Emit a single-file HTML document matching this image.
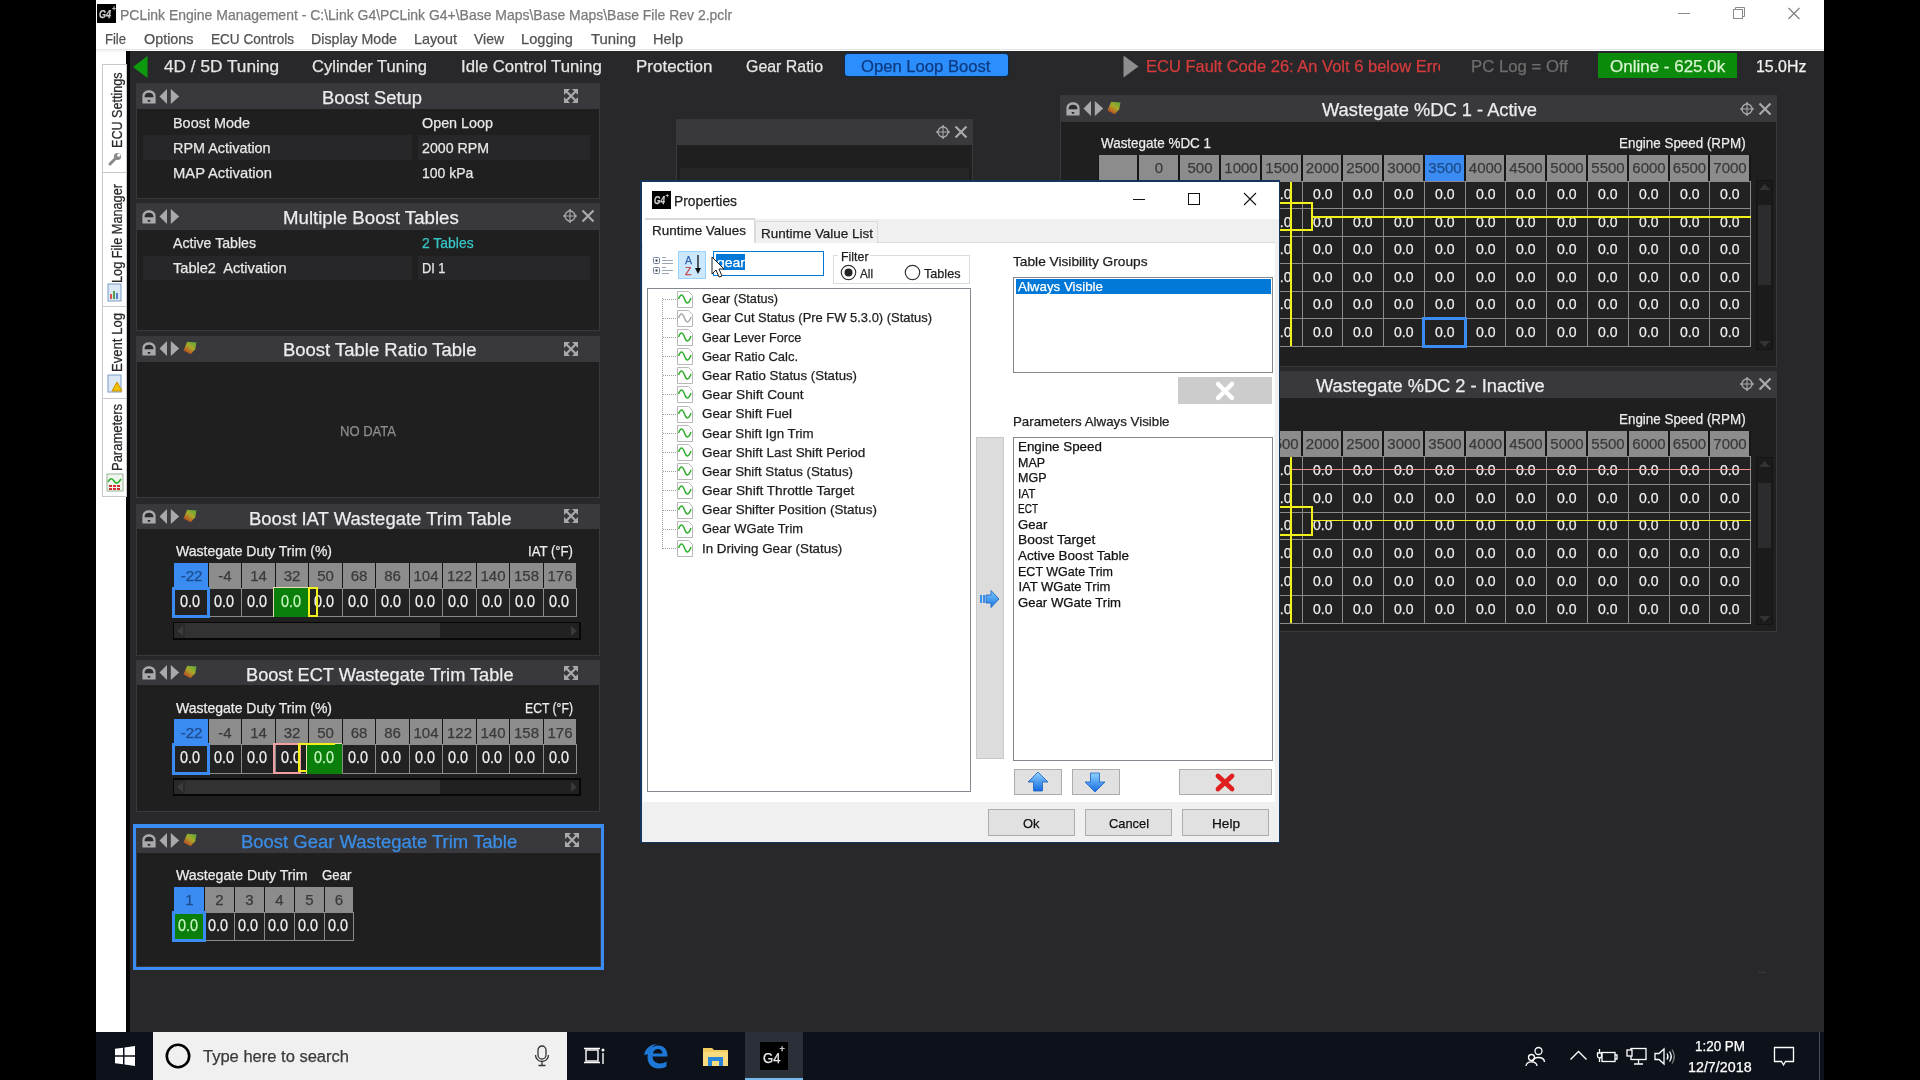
<!DOCTYPE html>
<html><head><meta charset="utf-8"><title>PCLink</title>
<style>
html,body{margin:0;padding:0;width:1920px;height:1080px;overflow:hidden;background:#000;}
body{position:relative;font-family:"Liberation Sans",sans-serif;}
.a{position:absolute;}
.t{position:absolute;white-space:pre;transform-origin:0 0;-webkit-text-stroke:0.25px currentColor;}
svg.a{overflow:visible;}
</style></head><body><div class="a" style="left:0;top:0;width:1920px;height:1080px;overflow:hidden;will-change:transform;">
<div class="a" style="left:0.0px;top:0.0px;width:1920.0px;height:1080.0px;background:#000;"></div>
<div class="a" style="left:96.0px;top:0.0px;width:1728.0px;height:52.0px;background:#ffffff;"></div>
<div class="a" style="left:96.0px;top:49.0px;width:1728.0px;height:1.0px;background:#e6e6e6;"></div>
<div class="a" style="left:96.0px;top:50.0px;width:30.0px;height:2.0px;background:#f4f4f4;"></div>
<div class="a" style="left:96.0px;top:52.0px;width:29.5px;height:980.0px;background:#ffffff;"></div>
<div class="a" style="left:125.5px;top:51.0px;width:1698.5px;height:981.0px;background:#28282b;"></div>
<div class="a" style="left:125.5px;top:51.0px;width:4.2px;height:981.0px;background:#050505;"></div>
<div class="a" style="left:97.0px;top:4.0px;width:19.0px;height:19.0px;background:#000;"></div>
<div class="t" style="left:99.0px;top:8.7px;font-size:11.00px;line-height:11.00px;color:#cfcfcf;transform:scaleX(0.8178);font-style:italic;font-weight:bold;">G4</div>
<div class="t" style="left:112.0px;top:5.1px;font-size:7.00px;line-height:7.00px;color:#cfcfcf;">+</div>
<div class="t" style="left:120.0px;top:7.7px;font-size:14.50px;line-height:14.50px;color:#7a7a7a;transform:scaleX(0.9631);">PCLink Engine Management - C:\Link G4\PCLink G4+\Base Maps\Base Maps\Base File Rev 2.pclr</div>
<div class="a" style="left:1678.0px;top:12.5px;width:12.0px;height:1.0px;background:#8a8a8a;"></div>
<svg class="a" style="left:1732.0px;top:6.0px;" width="14.0" height="14.0" viewBox="0 0 14.0 14.0"><rect x="1.5" y="3.5" width="9" height="9" fill="none" stroke="#8a8a8a" stroke-width="1"/><path d="M3.5 3.5 V1.5 H12.5 V10.5 H10.5" fill="none" stroke="#8a8a8a" stroke-width="1"/></svg>
<svg class="a" style="left:1787.0px;top:7.0px;" width="14.0" height="13.0" viewBox="0 0 14.0 13.0"><path d="M1.5 1 L12.5 12 M12.5 1 L1.5 12" stroke="#7a7a7a" stroke-width="1.1"/></svg>
<div class="t" style="left:105.0px;top:31.3px;font-size:15.00px;line-height:15.00px;color:#525252;transform:scaleX(0.8688);">File</div>
<div class="t" style="left:143.8px;top:31.3px;font-size:15.00px;line-height:15.00px;color:#525252;transform:scaleX(0.9576);">Options</div>
<div class="t" style="left:210.8px;top:31.3px;font-size:15.00px;line-height:15.00px;color:#525252;transform:scaleX(0.9052);">ECU Controls</div>
<div class="t" style="left:311.0px;top:31.3px;font-size:15.00px;line-height:15.00px;color:#525252;transform:scaleX(0.9464);">Display Mode</div>
<div class="t" style="left:414.3px;top:31.3px;font-size:15.00px;line-height:15.00px;color:#525252;transform:scaleX(0.9548);">Layout</div>
<div class="t" style="left:474.0px;top:31.3px;font-size:15.00px;line-height:15.00px;color:#525252;transform:scaleX(0.9305);">View</div>
<div class="t" style="left:521.0px;top:31.3px;font-size:15.00px;line-height:15.00px;color:#525252;transform:scaleX(0.9740);">Logging</div>
<div class="t" style="left:590.7px;top:31.3px;font-size:15.00px;line-height:15.00px;color:#525252;transform:scaleX(0.9932);">Tuning</div>
<div class="t" style="left:652.7px;top:31.3px;font-size:15.00px;line-height:15.00px;color:#525252;transform:scaleX(0.9724);">Help</div>
<div class="a" style="left:102.0px;top:64.0px;width:25.0px;height:433.0px;background:#ffffff;box-sizing:border-box;border:1px solid #c9c9c9;"></div>
<div class="a" style="left:103.0px;top:172.0px;width:23.0px;height:1.0px;background:#c9c9c9;"></div>
<div class="a" style="left:103.0px;top:306.0px;width:23.0px;height:1.0px;background:#c9c9c9;"></div>
<div class="a" style="left:103.0px;top:398.0px;width:23.0px;height:1.0px;background:#c9c9c9;"></div>
<div class="t" style="left:109.8px;top:147.5px;font-size:14.0px;line-height:14.0px;color:#2a2a2a;transform-origin:0 0;transform:rotate(-90deg) scaleX(0.8985);">ECU Settings</div>
<div class="t" style="left:109.8px;top:283.0px;font-size:14.0px;line-height:14.0px;color:#2a2a2a;transform-origin:0 0;transform:rotate(-90deg) scaleX(0.9087);">Log File Manager</div>
<div class="t" style="left:109.8px;top:372.0px;font-size:14.0px;line-height:14.0px;color:#2a2a2a;transform-origin:0 0;transform:rotate(-90deg) scaleX(0.9358);">Event Log</div>
<div class="t" style="left:109.8px;top:471.0px;font-size:14.0px;line-height:14.0px;color:#2a2a2a;transform-origin:0 0;transform:rotate(-90deg) scaleX(0.9260);">Parameters</div>
<svg class="a" style="left:107.0px;top:151.0px;" width="16.0" height="16.0" viewBox="0 0 16.0 16.0"><path d="M3 13 L9 7" stroke="#8a8a8a" stroke-width="3" stroke-linecap="round"/><circle cx="10.5" cy="5.5" r="3.6" fill="#8a8a8a"/><circle cx="11.8" cy="4.2" r="1.6" fill="#fff"/></svg>
<svg class="a" style="left:106.0px;top:283.0px;" width="18.0" height="19.0" viewBox="0 0 18.0 19.0"><rect x="2" y="1" width="13" height="17" fill="#dbe9f7" stroke="#7d9cc0"/><rect x="4" y="11" width="2" height="5" fill="#e05050"/><rect x="7" y="8" width="2" height="8" fill="#50a050"/><rect x="10" y="10" width="2" height="6" fill="#5080d0"/></svg>
<svg class="a" style="left:106.0px;top:374.0px;" width="18.0" height="19.0" viewBox="0 0 18.0 19.0"><rect x="2" y="1" width="13" height="17" fill="#dbe9f7" stroke="#7d9cc0"/><path d="M6 17 L11 8 L16 17 Z" fill="#f2c200" stroke="#c89000"/></svg>
<svg class="a" style="left:106.0px;top:473.0px;" width="18.0" height="19.0" viewBox="0 0 18.0 19.0"><rect x="1" y="1" width="16" height="17" fill="#eef6ee" stroke="#9ab09a"/><path d="M2 9 Q5 3 8 8 T15 6" fill="none" stroke="#30b030" stroke-width="1.6"/><rect x="3" y="12" width="3" height="2" fill="#d03030"/><rect x="7" y="12" width="3" height="2" fill="#d03030"/><rect x="11" y="12" width="3" height="2" fill="#d03030"/><rect x="3" y="15" width="3" height="2" fill="#d03030"/><rect x="7" y="15" width="3" height="2" fill="#d03030"/><rect x="11" y="15" width="3" height="2" fill="#d03030"/></svg>
<svg class="a" style="left:132.0px;top:55.0px;" width="17.0" height="24.0" viewBox="0 0 17.0 24.0"><path d="M15.5 1 L15.5 23 L1 12 Z" fill="#0e9a0e"/></svg>
<div class="t" style="left:164.0px;top:58.0px;font-size:16.50px;line-height:16.50px;color:#e6e6e6;transform:scaleX(1.0449);">4D / 5D Tuning</div>
<div class="t" style="left:311.7px;top:58.0px;font-size:16.50px;line-height:16.50px;color:#e6e6e6;transform:scaleX(1.0031);">Cylinder Tuning</div>
<div class="t" style="left:461.0px;top:58.0px;font-size:16.50px;line-height:16.50px;color:#e6e6e6;transform:scaleX(1.0159);">Idle Control Tuning</div>
<div class="t" style="left:636.0px;top:58.0px;font-size:16.50px;line-height:16.50px;color:#e6e6e6;transform:scaleX(1.0297);">Protection</div>
<div class="t" style="left:746.0px;top:58.0px;font-size:16.50px;line-height:16.50px;color:#e6e6e6;transform:scaleX(0.9651);">Gear Ratio</div>
<div class="a" style="left:844.0px;top:53.2px;width:164.5px;height:24.0px;background:#0e2a4a;border-radius:4px;"></div>
<div class="a" style="left:845.0px;top:54.2px;width:162.5px;height:22.0px;background:#2c8dfc;border-radius:3px;"></div>
<div class="t" style="left:861.0px;top:58.0px;font-size:16.50px;line-height:16.50px;color:#0d3b82;transform:scaleX(1.0083);">Open Loop Boost</div>
<svg class="a" style="left:1122.0px;top:54.0px;" width="18.0" height="25.0" viewBox="0 0 18.0 25.0"><path d="M1.5 1.5 L16.5 12.5 L1.5 23.5 Z" fill="#8e8e8e"/></svg>
<div class="a" style="left:1146px;top:52px;width:294px;height:26px;overflow:hidden;">
<div class="t" style="left:0.0px;top:6.2px;font-size:16.50px;line-height:16.50px;color:#d63b3b;">ECU Fault Code 26: An Volt 6 below Error</div>
</div>
<div class="t" style="left:1470.8px;top:58.0px;font-size:16.50px;line-height:16.50px;color:#6e6e6e;transform:scaleX(1.0152);">PC Log = Off</div>
<div class="a" style="left:1598.4px;top:52.5px;width:139.0px;height:25.2px;background:#0b8a0b;"></div>
<div class="t" style="left:1610.3px;top:58.0px;font-size:16.50px;line-height:16.50px;color:#d8f4d0;transform:scaleX(1.0295);">Online - 625.0k</div>
<div class="t" style="left:1755.8px;top:58.0px;font-size:16.50px;line-height:16.50px;color:#f0f0f0;transform:scaleX(0.9640);">15.0Hz</div>
<div class="a" style="left:136.0px;top:83.0px;width:464.0px;height:116.0px;background:#39393d;"></div>
<div class="a" style="left:137.0px;top:109.0px;width:462.0px;height:89.0px;background:#1f1f20;"></div>
<svg class="a" style="left:141.5px;top:89.5px;" width="14.0" height="14.0" viewBox="0 0 14.0 14.0"><path d="M0.4 13.6 V6.5 C0.4 2.6 3 0.3 7 0.3 C11 0.3 13.6 2.6 13.6 6.5 V13.6 Z" fill="#a9a9ad"/><path d="M2.6 6.6 C2.6 4.2 4.4 2.7 7 2.7 C9.6 2.7 11.4 4.2 11.4 6.6 V7.2 H2.6 Z" fill="#2a2a2e"/><rect x="5.6" y="10" width="2.8" height="1.7" rx="0.6" fill="#2a2a2e"/></svg>
<svg class="a" style="left:159.0px;top:88.5px;" width="21.0" height="15.0" viewBox="0 0 21.0 15.0"><path d="M8 0 L8 15 L0.5 7.5 Z" fill="#a9a9ad"/><path d="M11.8 0 L11.8 15 L20.2 7.5 Z" fill="#a9a9ad"/></svg>
<div class="t" style="left:321.7px;top:88.8px;font-size:18.00px;line-height:18.00px;color:#ececec;transform:scaleX(1.0197);">Boost Setup</div>
<svg class="a" style="left:564.0px;top:89.0px;" width="14.0" height="14.0" viewBox="0 0 14.0 14.0"><g stroke="#a9a9ad" stroke-width="2.2" fill="none"><path d="M2 2 L12 12 M12 2 L2 12"/></g><g fill="#a9a9ad"><path d="M0 0 H6 L0 6 Z"/><path d="M14 0 V6 L8 0 Z"/><path d="M0 14 V8 L6 14 Z"/><path d="M14 14 H8 L14 8 Z"/></g></svg>
<div class="a" style="left:143.0px;top:135.0px;width:269.0px;height:25.0px;background:#272729;"></div>
<div class="a" style="left:418.0px;top:135.0px;width:172.0px;height:25.0px;background:#272729;"></div>
<div class="t" style="left:173.0px;top:114.8px;font-size:15.00px;line-height:15.00px;color:#e8e8e8;transform:scaleX(0.9620);">Boost Mode</div>
<div class="t" style="left:173.0px;top:139.8px;font-size:15.00px;line-height:15.00px;color:#e8e8e8;transform:scaleX(0.9597);">RPM Activation</div>
<div class="t" style="left:173.0px;top:164.8px;font-size:15.00px;line-height:15.00px;color:#e8e8e8;transform:scaleX(0.9840);">MAP Activation</div>
<div class="t" style="left:422.3px;top:114.8px;font-size:15.00px;line-height:15.00px;color:#e8e8e8;transform:scaleX(0.9565);">Open Loop</div>
<div class="t" style="left:422.3px;top:139.8px;font-size:15.00px;line-height:15.00px;color:#e8e8e8;transform:scaleX(0.9454);">2000 RPM</div>
<div class="t" style="left:422.3px;top:164.8px;font-size:15.00px;line-height:15.00px;color:#e8e8e8;transform:scaleX(0.9339);">100 kPa</div>
<div class="a" style="left:136.0px;top:203.0px;width:464.0px;height:128.0px;background:#39393d;"></div>
<div class="a" style="left:137.0px;top:229.6px;width:462.0px;height:100.4px;background:#1f1f20;"></div>
<svg class="a" style="left:141.5px;top:209.8px;" width="14.0" height="14.0" viewBox="0 0 14.0 14.0"><path d="M0.4 13.6 V6.5 C0.4 2.6 3 0.3 7 0.3 C11 0.3 13.6 2.6 13.6 6.5 V13.6 Z" fill="#a9a9ad"/><path d="M2.6 6.6 C2.6 4.2 4.4 2.7 7 2.7 C9.6 2.7 11.4 4.2 11.4 6.6 V7.2 H2.6 Z" fill="#2a2a2e"/><rect x="5.6" y="10" width="2.8" height="1.7" rx="0.6" fill="#2a2a2e"/></svg>
<svg class="a" style="left:159.0px;top:208.8px;" width="21.0" height="15.0" viewBox="0 0 21.0 15.0"><path d="M8 0 L8 15 L0.5 7.5 Z" fill="#a9a9ad"/><path d="M11.8 0 L11.8 15 L20.2 7.5 Z" fill="#a9a9ad"/></svg>
<div class="t" style="left:282.9px;top:208.8px;font-size:18.00px;line-height:18.00px;color:#ececec;transform:scaleX(1.0350);">Multiple Boost Tables</div>
<svg class="a" style="left:563.0px;top:209.3px;" width="14.0" height="14.0" viewBox="0 0 14.0 14.0"><g stroke="#a9a9ad" fill="none"><circle cx="7" cy="7" r="5" stroke-width="1.3"/><path d="M7 0.3 V13.7 M0.3 7 H13.7" stroke-width="1.1"/></g><g fill="#a9a9ad"><path d="M7 0 L8.6 1.8 H5.4 Z"/><path d="M7 14 L8.6 12.2 H5.4 Z"/><path d="M0 7 L1.8 5.4 V8.6 Z"/><path d="M14 7 L12.2 5.4 V8.6 Z"/></g></svg>
<svg class="a" style="left:581.0px;top:209.3px;" width="14.0" height="14.0" viewBox="0 0 14.0 14.0"><path d="M1.5 1.5 L12.5 12.5 M12.5 1.5 L1.5 12.5" stroke="#a9a9ad" stroke-width="2.2"/></svg>
<div class="a" style="left:143.0px;top:256.0px;width:269.0px;height:24.0px;background:#272729;"></div>
<div class="a" style="left:418.0px;top:256.0px;width:172.0px;height:24.0px;background:#272729;"></div>
<div class="t" style="left:172.5px;top:234.8px;font-size:15.00px;line-height:15.00px;color:#e8e8e8;transform:scaleX(0.9421);">Active Tables</div>
<div class="t" style="left:172.5px;top:259.8px;font-size:15.00px;line-height:15.00px;color:#e8e8e8;transform:scaleX(0.9723);">Table2  Activation</div>
<div class="t" style="left:422.3px;top:234.8px;font-size:15.00px;line-height:15.00px;color:#39c6c6;transform:scaleX(0.9281);">2 Tables</div>
<div class="t" style="left:422.3px;top:259.8px;font-size:15.00px;line-height:15.00px;color:#e8e8e8;transform:scaleX(0.8543);">DI 1</div>
<div class="a" style="left:136.0px;top:335.6px;width:464.0px;height:162.4px;background:#39393d;"></div>
<div class="a" style="left:137.0px;top:361.7px;width:462.0px;height:135.3px;background:#1f1f20;"></div>
<svg class="a" style="left:141.5px;top:342.1px;" width="14.0" height="14.0" viewBox="0 0 14.0 14.0"><path d="M0.4 13.6 V6.5 C0.4 2.6 3 0.3 7 0.3 C11 0.3 13.6 2.6 13.6 6.5 V13.6 Z" fill="#a9a9ad"/><path d="M2.6 6.6 C2.6 4.2 4.4 2.7 7 2.7 C9.6 2.7 11.4 4.2 11.4 6.6 V7.2 H2.6 Z" fill="#2a2a2e"/><rect x="5.6" y="10" width="2.8" height="1.7" rx="0.6" fill="#2a2a2e"/></svg>
<svg class="a" style="left:159.0px;top:341.1px;" width="21.0" height="15.0" viewBox="0 0 21.0 15.0"><path d="M8 0 L8 15 L0.5 7.5 Z" fill="#a9a9ad"/><path d="M11.8 0 L11.8 15 L20.2 7.5 Z" fill="#a9a9ad"/></svg>
<svg class="a" style="left:183.0px;top:341.1px;" width="15.0" height="15.0" viewBox="0 0 15.0 15.0"><defs><linearGradient id="g2171" x1="0.9" y1="0" x2="0.2" y2="1"><stop offset="0" stop-color="#5da83a"/><stop offset="0.45" stop-color="#a8a82a"/><stop offset="0.75" stop-color="#b86a22"/><stop offset="1" stop-color="#a83a26"/></linearGradient></defs><path d="M4.2 0.8 L13.5 1.6 L12.2 8.2 L7.6 13.2 L0.5 9.6 Z" fill="url(#g2171)"/></svg>
<div class="t" style="left:283.3px;top:341.4px;font-size:18.00px;line-height:18.00px;color:#ececec;transform:scaleX(1.0262);">Boost Table Ratio Table</div>
<svg class="a" style="left:564.0px;top:341.6px;" width="14.0" height="14.0" viewBox="0 0 14.0 14.0"><g stroke="#a9a9ad" stroke-width="2.2" fill="none"><path d="M2 2 L12 12 M12 2 L2 12"/></g><g fill="#a9a9ad"><path d="M0 0 H6 L0 6 Z"/><path d="M14 0 V6 L8 0 Z"/><path d="M0 14 V8 L6 14 Z"/><path d="M14 14 H8 L14 8 Z"/></g></svg>
<div class="t" style="left:340.0px;top:424.1px;font-size:14.00px;line-height:14.00px;color:#8c8c8c;transform:scaleX(0.9310);">NO DATA</div>
<div class="a" style="left:136.0px;top:503.8px;width:464.0px;height:152.2px;background:#39393d;"></div>
<div class="a" style="left:137.0px;top:528.8px;width:462.0px;height:126.2px;background:#1f1f20;"></div>
<svg class="a" style="left:141.5px;top:509.8px;" width="14.0" height="14.0" viewBox="0 0 14.0 14.0"><path d="M0.4 13.6 V6.5 C0.4 2.6 3 0.3 7 0.3 C11 0.3 13.6 2.6 13.6 6.5 V13.6 Z" fill="#a9a9ad"/><path d="M2.6 6.6 C2.6 4.2 4.4 2.7 7 2.7 C9.6 2.7 11.4 4.2 11.4 6.6 V7.2 H2.6 Z" fill="#2a2a2e"/><rect x="5.6" y="10" width="2.8" height="1.7" rx="0.6" fill="#2a2a2e"/></svg>
<svg class="a" style="left:159.0px;top:508.8px;" width="21.0" height="15.0" viewBox="0 0 21.0 15.0"><path d="M8 0 L8 15 L0.5 7.5 Z" fill="#a9a9ad"/><path d="M11.8 0 L11.8 15 L20.2 7.5 Z" fill="#a9a9ad"/></svg>
<svg class="a" style="left:183.0px;top:508.8px;" width="15.0" height="15.0" viewBox="0 0 15.0 15.0"><defs><linearGradient id="g2338" x1="0.9" y1="0" x2="0.2" y2="1"><stop offset="0" stop-color="#5da83a"/><stop offset="0.45" stop-color="#a8a82a"/><stop offset="0.75" stop-color="#b86a22"/><stop offset="1" stop-color="#a83a26"/></linearGradient></defs><path d="M4.2 0.8 L13.5 1.6 L12.2 8.2 L7.6 13.2 L0.5 9.6 Z" fill="url(#g2338)"/></svg>
<div class="t" style="left:248.8px;top:509.5px;font-size:18.00px;line-height:18.00px;color:#ececec;transform:scaleX(1.0276);">Boost IAT Wastegate Trim Table</div>
<svg class="a" style="left:564.0px;top:509.2px;" width="14.0" height="14.0" viewBox="0 0 14.0 14.0"><g stroke="#a9a9ad" stroke-width="2.2" fill="none"><path d="M2 2 L12 12 M12 2 L2 12"/></g><g fill="#a9a9ad"><path d="M0 0 H6 L0 6 Z"/><path d="M14 0 V6 L8 0 Z"/><path d="M0 14 V8 L6 14 Z"/><path d="M14 14 H8 L14 8 Z"/></g></svg>
<div class="t" style="left:176.0px;top:543.3px;font-size:15.00px;line-height:15.00px;color:#ececec;transform:scaleX(0.9343);">Wastegate Duty Trim (%)</div>
<div class="t" style="left:527.5px;top:543.3px;font-size:15.00px;line-height:15.00px;color:#ececec;transform:scaleX(0.8777);">IAT (°F)</div>
<div class="a" style="left:174.0px;top:563.0px;width:402.0px;height:53.0px;background:#161616;"></div>
<div class="a" style="left:174.0px;top:563.0px;width:34.0px;height:25.0px;background:#3a8cf2;"></div>
<div class="t" style="left:180.7px;top:568.3px;font-size:15.00px;line-height:15.00px;color:#1d4c8c;">-22</div>
<div class="a" style="left:209.0px;top:563.0px;width:32.0px;height:25.0px;background:#8c8c8c;"></div>
<div class="t" style="left:218.3px;top:568.3px;font-size:15.00px;line-height:15.00px;color:#3a3a3a;">-4</div>
<div class="a" style="left:242.0px;top:563.0px;width:33.0px;height:25.0px;background:#8c8c8c;"></div>
<div class="t" style="left:250.2px;top:568.3px;font-size:15.00px;line-height:15.00px;color:#3a3a3a;">14</div>
<div class="a" style="left:276.0px;top:563.0px;width:32.0px;height:25.0px;background:#8c8c8c;"></div>
<div class="t" style="left:283.7px;top:568.3px;font-size:15.00px;line-height:15.00px;color:#3a3a3a;">32</div>
<div class="a" style="left:309.0px;top:563.0px;width:33.0px;height:25.0px;background:#8c8c8c;"></div>
<div class="t" style="left:317.2px;top:568.3px;font-size:15.00px;line-height:15.00px;color:#3a3a3a;">50</div>
<div class="a" style="left:343.0px;top:563.0px;width:32.0px;height:25.0px;background:#8c8c8c;"></div>
<div class="t" style="left:350.7px;top:568.3px;font-size:15.00px;line-height:15.00px;color:#3a3a3a;">68</div>
<div class="a" style="left:376.0px;top:563.0px;width:33.0px;height:25.0px;background:#8c8c8c;"></div>
<div class="t" style="left:384.2px;top:568.3px;font-size:15.00px;line-height:15.00px;color:#3a3a3a;">86</div>
<div class="a" style="left:410.0px;top:563.0px;width:32.0px;height:25.0px;background:#8c8c8c;"></div>
<div class="t" style="left:413.5px;top:568.3px;font-size:15.00px;line-height:15.00px;color:#3a3a3a;">104</div>
<div class="a" style="left:443.0px;top:563.0px;width:33.0px;height:25.0px;background:#8c8c8c;"></div>
<div class="t" style="left:447.0px;top:568.3px;font-size:15.00px;line-height:15.00px;color:#3a3a3a;">122</div>
<div class="a" style="left:477.0px;top:563.0px;width:32.0px;height:25.0px;background:#8c8c8c;"></div>
<div class="t" style="left:480.5px;top:568.3px;font-size:15.00px;line-height:15.00px;color:#3a3a3a;">140</div>
<div class="a" style="left:510.0px;top:563.0px;width:33.0px;height:25.0px;background:#8c8c8c;"></div>
<div class="t" style="left:514.0px;top:568.3px;font-size:15.00px;line-height:15.00px;color:#3a3a3a;">158</div>
<div class="a" style="left:544.0px;top:563.0px;width:32.0px;height:25.0px;background:#8c8c8c;"></div>
<div class="t" style="left:547.5px;top:568.3px;font-size:15.00px;line-height:15.00px;color:#3a3a3a;">176</div>
<div class="a" style="left:174.0px;top:588.0px;width:403.0px;height:29.0px;background:#8a8a8a;"></div>
<div class="a" style="left:175.0px;top:589.0px;width:33.0px;height:27.0px;background:#222222;"></div>
<div class="t" style="left:180.0px;top:593.9px;font-size:16.00px;line-height:16.00px;color:#f0f0f0;transform:scaleX(0.8992);">0.0</div>
<div class="a" style="left:209.0px;top:589.0px;width:32.0px;height:27.0px;background:#222222;"></div>
<div class="t" style="left:213.5px;top:593.9px;font-size:16.00px;line-height:16.00px;color:#f0f0f0;transform:scaleX(0.8992);">0.0</div>
<div class="a" style="left:242.0px;top:589.0px;width:33.0px;height:27.0px;background:#222222;"></div>
<div class="t" style="left:247.0px;top:593.9px;font-size:16.00px;line-height:16.00px;color:#f0f0f0;transform:scaleX(0.8992);">0.0</div>
<div class="a" style="left:276.0px;top:589.0px;width:32.0px;height:27.0px;background:#222222;"></div>
<div class="a" style="left:273.0px;top:587.0px;width:35.0px;height:29.5px;background:#e8e0b0;"></div>
<div class="a" style="left:274.0px;top:588.0px;width:34.0px;height:28.5px;background:#0b7f0b;"></div>
<div class="t" style="left:280.5px;top:593.9px;font-size:16.00px;line-height:16.00px;color:#c8f5c0;transform:scaleX(0.8992);">0.0</div>
<div class="a" style="left:309.0px;top:589.0px;width:33.0px;height:27.0px;background:#222222;"></div>
<div class="t" style="left:314.0px;top:593.9px;font-size:16.00px;line-height:16.00px;color:#f0f0f0;transform:scaleX(0.8992);">0.0</div>
<div class="a" style="left:343.0px;top:589.0px;width:32.0px;height:27.0px;background:#222222;"></div>
<div class="t" style="left:347.5px;top:593.9px;font-size:16.00px;line-height:16.00px;color:#f0f0f0;transform:scaleX(0.8992);">0.0</div>
<div class="a" style="left:376.0px;top:589.0px;width:33.0px;height:27.0px;background:#222222;"></div>
<div class="t" style="left:381.0px;top:593.9px;font-size:16.00px;line-height:16.00px;color:#f0f0f0;transform:scaleX(0.8992);">0.0</div>
<div class="a" style="left:410.0px;top:589.0px;width:32.0px;height:27.0px;background:#222222;"></div>
<div class="t" style="left:414.5px;top:593.9px;font-size:16.00px;line-height:16.00px;color:#f0f0f0;transform:scaleX(0.8992);">0.0</div>
<div class="a" style="left:443.0px;top:589.0px;width:33.0px;height:27.0px;background:#222222;"></div>
<div class="t" style="left:448.0px;top:593.9px;font-size:16.00px;line-height:16.00px;color:#f0f0f0;transform:scaleX(0.8992);">0.0</div>
<div class="a" style="left:477.0px;top:589.0px;width:32.0px;height:27.0px;background:#222222;"></div>
<div class="t" style="left:481.5px;top:593.9px;font-size:16.00px;line-height:16.00px;color:#f0f0f0;transform:scaleX(0.8992);">0.0</div>
<div class="a" style="left:510.0px;top:589.0px;width:33.0px;height:27.0px;background:#222222;"></div>
<div class="t" style="left:515.0px;top:593.9px;font-size:16.00px;line-height:16.00px;color:#f0f0f0;transform:scaleX(0.8992);">0.0</div>
<div class="a" style="left:544.0px;top:589.0px;width:32.0px;height:27.0px;background:#222222;"></div>
<div class="t" style="left:548.5px;top:593.9px;font-size:16.00px;line-height:16.00px;color:#f0f0f0;transform:scaleX(0.8992);">0.0</div>
<div class="a" style="left:308.0px;top:586.7px;width:10.0px;height:29.9px;box-sizing:border-box;border:2.5px solid #f2f21a;"></div>
<div class="a" style="left:171.5px;top:587.0px;width:38.2px;height:31.0px;box-sizing:border-box;border:3.75px solid #3a8cf2;"></div>
<div class="a" style="left:172.7px;top:621.7px;width:408.0px;height:18.3px;background:#070707;"></div>
<div class="a" style="left:174.2px;top:623.2px;width:405.0px;height:14.8px;background:#212121;"></div>
<div class="a" style="left:174.2px;top:623.2px;width:266.0px;height:14.8px;background:#323232;"></div>
<div class="a" style="left:174.2px;top:623.2px;width:11.0px;height:14.8px;background:#2a2a2a;"></div>
<svg class="a" style="left:176.7px;top:625.7px;" width="7.0" height="10.0" viewBox="0 0 7.0 10.0"><path d="M6 0 V10 L0 5 Z" fill="#3c3c3c"/></svg>
<svg class="a" style="left:569.7px;top:625.7px;" width="7.0" height="10.0" viewBox="0 0 7.0 10.0"><path d="M1 0 V10 L7 5 Z" fill="#3a3a3a"/></svg>
<div class="a" style="left:136.0px;top:660.0px;width:464.0px;height:152.0px;background:#39393d;"></div>
<div class="a" style="left:137.0px;top:685.0px;width:462.0px;height:126.0px;background:#1f1f20;"></div>
<svg class="a" style="left:141.5px;top:666.0px;" width="14.0" height="14.0" viewBox="0 0 14.0 14.0"><path d="M0.4 13.6 V6.5 C0.4 2.6 3 0.3 7 0.3 C11 0.3 13.6 2.6 13.6 6.5 V13.6 Z" fill="#a9a9ad"/><path d="M2.6 6.6 C2.6 4.2 4.4 2.7 7 2.7 C9.6 2.7 11.4 4.2 11.4 6.6 V7.2 H2.6 Z" fill="#2a2a2e"/><rect x="5.6" y="10" width="2.8" height="1.7" rx="0.6" fill="#2a2a2e"/></svg>
<svg class="a" style="left:159.0px;top:665.0px;" width="21.0" height="15.0" viewBox="0 0 21.0 15.0"><path d="M8 0 L8 15 L0.5 7.5 Z" fill="#a9a9ad"/><path d="M11.8 0 L11.8 15 L20.2 7.5 Z" fill="#a9a9ad"/></svg>
<svg class="a" style="left:183.0px;top:665.0px;" width="15.0" height="15.0" viewBox="0 0 15.0 15.0"><defs><linearGradient id="g2495" x1="0.9" y1="0" x2="0.2" y2="1"><stop offset="0" stop-color="#5da83a"/><stop offset="0.45" stop-color="#a8a82a"/><stop offset="0.75" stop-color="#b86a22"/><stop offset="1" stop-color="#a83a26"/></linearGradient></defs><path d="M4.2 0.8 L13.5 1.6 L12.2 8.2 L7.6 13.2 L0.5 9.6 Z" fill="url(#g2495)"/></svg>
<div class="t" style="left:246.2px;top:665.8px;font-size:18.00px;line-height:18.00px;color:#ececec;transform:scaleX(1.0103);">Boost ECT Wastegate Trim Table</div>
<svg class="a" style="left:564.0px;top:665.5px;" width="14.0" height="14.0" viewBox="0 0 14.0 14.0"><g stroke="#a9a9ad" stroke-width="2.2" fill="none"><path d="M2 2 L12 12 M12 2 L2 12"/></g><g fill="#a9a9ad"><path d="M0 0 H6 L0 6 Z"/><path d="M14 0 V6 L8 0 Z"/><path d="M0 14 V8 L6 14 Z"/><path d="M14 14 H8 L14 8 Z"/></g></svg>
<div class="t" style="left:176.0px;top:699.8px;font-size:15.00px;line-height:15.00px;color:#ececec;transform:scaleX(0.9343);">Wastegate Duty Trim (%)</div>
<div class="t" style="left:524.5px;top:699.8px;font-size:15.00px;line-height:15.00px;color:#ececec;transform:scaleX(0.8129);">ECT (°F)</div>
<div class="a" style="left:174.0px;top:719.0px;width:402.0px;height:54.0px;background:#161616;"></div>
<div class="a" style="left:174.0px;top:719.0px;width:34.0px;height:25.0px;background:#3a8cf2;"></div>
<div class="t" style="left:180.7px;top:724.6px;font-size:15.00px;line-height:15.00px;color:#1d4c8c;">-22</div>
<div class="a" style="left:209.0px;top:719.0px;width:32.0px;height:25.0px;background:#8c8c8c;"></div>
<div class="t" style="left:218.3px;top:724.6px;font-size:15.00px;line-height:15.00px;color:#3a3a3a;">-4</div>
<div class="a" style="left:242.0px;top:719.0px;width:33.0px;height:25.0px;background:#8c8c8c;"></div>
<div class="t" style="left:250.2px;top:724.6px;font-size:15.00px;line-height:15.00px;color:#3a3a3a;">14</div>
<div class="a" style="left:276.0px;top:719.0px;width:32.0px;height:25.0px;background:#8c8c8c;"></div>
<div class="t" style="left:283.7px;top:724.6px;font-size:15.00px;line-height:15.00px;color:#3a3a3a;">32</div>
<div class="a" style="left:309.0px;top:719.0px;width:33.0px;height:25.0px;background:#8c8c8c;"></div>
<div class="t" style="left:317.2px;top:724.6px;font-size:15.00px;line-height:15.00px;color:#3a3a3a;">50</div>
<div class="a" style="left:343.0px;top:719.0px;width:32.0px;height:25.0px;background:#8c8c8c;"></div>
<div class="t" style="left:350.7px;top:724.6px;font-size:15.00px;line-height:15.00px;color:#3a3a3a;">68</div>
<div class="a" style="left:376.0px;top:719.0px;width:33.0px;height:25.0px;background:#8c8c8c;"></div>
<div class="t" style="left:384.2px;top:724.6px;font-size:15.00px;line-height:15.00px;color:#3a3a3a;">86</div>
<div class="a" style="left:410.0px;top:719.0px;width:32.0px;height:25.0px;background:#8c8c8c;"></div>
<div class="t" style="left:413.5px;top:724.6px;font-size:15.00px;line-height:15.00px;color:#3a3a3a;">104</div>
<div class="a" style="left:443.0px;top:719.0px;width:33.0px;height:25.0px;background:#8c8c8c;"></div>
<div class="t" style="left:447.0px;top:724.6px;font-size:15.00px;line-height:15.00px;color:#3a3a3a;">122</div>
<div class="a" style="left:477.0px;top:719.0px;width:32.0px;height:25.0px;background:#8c8c8c;"></div>
<div class="t" style="left:480.5px;top:724.6px;font-size:15.00px;line-height:15.00px;color:#3a3a3a;">140</div>
<div class="a" style="left:510.0px;top:719.0px;width:33.0px;height:25.0px;background:#8c8c8c;"></div>
<div class="t" style="left:514.0px;top:724.6px;font-size:15.00px;line-height:15.00px;color:#3a3a3a;">158</div>
<div class="a" style="left:544.0px;top:719.0px;width:32.0px;height:25.0px;background:#8c8c8c;"></div>
<div class="t" style="left:547.5px;top:724.6px;font-size:15.00px;line-height:15.00px;color:#3a3a3a;">176</div>
<div class="a" style="left:174.0px;top:744.0px;width:403.0px;height:30.0px;background:#8a8a8a;"></div>
<div class="a" style="left:175.0px;top:745.0px;width:33.0px;height:28.0px;background:#222222;"></div>
<div class="t" style="left:180.0px;top:750.4px;font-size:16.00px;line-height:16.00px;color:#f0f0f0;transform:scaleX(0.8992);">0.0</div>
<div class="a" style="left:209.0px;top:745.0px;width:32.0px;height:28.0px;background:#222222;"></div>
<div class="t" style="left:213.5px;top:750.4px;font-size:16.00px;line-height:16.00px;color:#f0f0f0;transform:scaleX(0.8992);">0.0</div>
<div class="a" style="left:242.0px;top:745.0px;width:33.0px;height:28.0px;background:#222222;"></div>
<div class="t" style="left:247.0px;top:750.4px;font-size:16.00px;line-height:16.00px;color:#f0f0f0;transform:scaleX(0.8992);">0.0</div>
<div class="a" style="left:276.0px;top:745.0px;width:32.0px;height:28.0px;background:#222222;"></div>
<div class="t" style="left:280.5px;top:750.4px;font-size:16.00px;line-height:16.00px;color:#f0f0f0;transform:scaleX(0.8992);">0.0</div>
<div class="a" style="left:309.0px;top:745.0px;width:33.0px;height:28.0px;background:#222222;"></div>
<div class="a" style="left:306.0px;top:743.0px;width:36.0px;height:30.5px;background:#e8e0b0;"></div>
<div class="a" style="left:307.0px;top:744.0px;width:35.0px;height:29.5px;background:#0b7f0b;"></div>
<div class="t" style="left:314.0px;top:750.4px;font-size:16.00px;line-height:16.00px;color:#c8f5c0;transform:scaleX(0.8992);">0.0</div>
<div class="a" style="left:343.0px;top:745.0px;width:32.0px;height:28.0px;background:#222222;"></div>
<div class="t" style="left:347.5px;top:750.4px;font-size:16.00px;line-height:16.00px;color:#f0f0f0;transform:scaleX(0.8992);">0.0</div>
<div class="a" style="left:376.0px;top:745.0px;width:33.0px;height:28.0px;background:#222222;"></div>
<div class="t" style="left:381.0px;top:750.4px;font-size:16.00px;line-height:16.00px;color:#f0f0f0;transform:scaleX(0.8992);">0.0</div>
<div class="a" style="left:410.0px;top:745.0px;width:32.0px;height:28.0px;background:#222222;"></div>
<div class="t" style="left:414.5px;top:750.4px;font-size:16.00px;line-height:16.00px;color:#f0f0f0;transform:scaleX(0.8992);">0.0</div>
<div class="a" style="left:443.0px;top:745.0px;width:33.0px;height:28.0px;background:#222222;"></div>
<div class="t" style="left:448.0px;top:750.4px;font-size:16.00px;line-height:16.00px;color:#f0f0f0;transform:scaleX(0.8992);">0.0</div>
<div class="a" style="left:477.0px;top:745.0px;width:32.0px;height:28.0px;background:#222222;"></div>
<div class="t" style="left:481.5px;top:750.4px;font-size:16.00px;line-height:16.00px;color:#f0f0f0;transform:scaleX(0.8992);">0.0</div>
<div class="a" style="left:510.0px;top:745.0px;width:33.0px;height:28.0px;background:#222222;"></div>
<div class="t" style="left:515.0px;top:750.4px;font-size:16.00px;line-height:16.00px;color:#f0f0f0;transform:scaleX(0.8992);">0.0</div>
<div class="a" style="left:544.0px;top:745.0px;width:32.0px;height:28.0px;background:#222222;"></div>
<div class="t" style="left:548.5px;top:750.4px;font-size:16.00px;line-height:16.00px;color:#f0f0f0;transform:scaleX(0.8992);">0.0</div>
<div class="a" style="left:273.0px;top:743.0px;width:28.0px;height:30.5px;box-sizing:border-box;border:2.5px solid #f0a0a0;"></div>
<div class="a" style="left:171.5px;top:743.0px;width:38.2px;height:32.0px;box-sizing:border-box;border:3.75px solid #3a8cf2;"></div>
<div class="a" style="left:297.6px;top:742.7px;width:2.7px;height:29.5px;background:#f2f21a;"></div>
<div class="a" style="left:297.6px;top:742.7px;width:37.4px;height:2.8px;background:#f2f21a;"></div>
<div class="a" style="left:297.6px;top:769.5px;width:9.9px;height:2.7px;background:#f2f21a;"></div>
<div class="a" style="left:172.7px;top:778.0px;width:408.0px;height:18.3px;background:#070707;"></div>
<div class="a" style="left:174.2px;top:779.5px;width:405.0px;height:14.8px;background:#212121;"></div>
<div class="a" style="left:174.2px;top:779.5px;width:266.0px;height:14.8px;background:#323232;"></div>
<div class="a" style="left:174.2px;top:779.5px;width:11.0px;height:14.8px;background:#2a2a2a;"></div>
<svg class="a" style="left:176.7px;top:782.0px;" width="7.0" height="10.0" viewBox="0 0 7.0 10.0"><path d="M6 0 V10 L0 5 Z" fill="#3c3c3c"/></svg>
<svg class="a" style="left:569.7px;top:782.0px;" width="7.0" height="10.0" viewBox="0 0 7.0 10.0"><path d="M1 0 V10 L7 5 Z" fill="#3a3a3a"/></svg>
<div class="a" style="left:133.0px;top:824.4px;width:471.0px;height:145.6px;background:#3a8cf2;"></div>
<div class="a" style="left:136.0px;top:827.5px;width:465.0px;height:139.5px;background:#39393d;"></div>
<div class="a" style="left:137.0px;top:853.3px;width:463.0px;height:112.7px;background:#1f1f20;"></div>
<svg class="a" style="left:141.5px;top:833.9px;" width="14.0" height="14.0" viewBox="0 0 14.0 14.0"><path d="M0.4 13.6 V6.5 C0.4 2.6 3 0.3 7 0.3 C11 0.3 13.6 2.6 13.6 6.5 V13.6 Z" fill="#a9a9ad"/><path d="M2.6 6.6 C2.6 4.2 4.4 2.7 7 2.7 C9.6 2.7 11.4 4.2 11.4 6.6 V7.2 H2.6 Z" fill="#2a2a2e"/><rect x="5.6" y="10" width="2.8" height="1.7" rx="0.6" fill="#2a2a2e"/></svg>
<svg class="a" style="left:159.0px;top:832.9px;" width="21.0" height="15.0" viewBox="0 0 21.0 15.0"><path d="M8 0 L8 15 L0.5 7.5 Z" fill="#a9a9ad"/><path d="M11.8 0 L11.8 15 L20.2 7.5 Z" fill="#a9a9ad"/></svg>
<svg class="a" style="left:183.0px;top:832.9px;" width="15.0" height="15.0" viewBox="0 0 15.0 15.0"><defs><linearGradient id="g2662" x1="0.9" y1="0" x2="0.2" y2="1"><stop offset="0" stop-color="#5da83a"/><stop offset="0.45" stop-color="#a8a82a"/><stop offset="0.75" stop-color="#b86a22"/><stop offset="1" stop-color="#a83a26"/></linearGradient></defs><path d="M4.2 0.8 L13.5 1.6 L12.2 8.2 L7.6 13.2 L0.5 9.6 Z" fill="url(#g2662)"/></svg>
<div class="t" style="left:241.1px;top:833.3px;font-size:18.00px;line-height:18.00px;color:#3a8ee8;transform:scaleX(1.0263);">Boost Gear Wastegate Trim Table</div>
<svg class="a" style="left:565.0px;top:833.4px;" width="14.0" height="14.0" viewBox="0 0 14.0 14.0"><g stroke="#a9a9ad" stroke-width="2.2" fill="none"><path d="M2 2 L12 12 M12 2 L2 12"/></g><g fill="#a9a9ad"><path d="M0 0 H6 L0 6 Z"/><path d="M14 0 V6 L8 0 Z"/><path d="M0 14 V8 L6 14 Z"/><path d="M14 14 H8 L14 8 Z"/></g></svg>
<div class="a" style="left:137.0px;top:853.3px;width:463.0px;height:113.2px;background:#1f1f20;"></div>
<div class="t" style="left:176.0px;top:867.3px;font-size:15.00px;line-height:15.00px;color:#ececec;transform:scaleX(0.9428);">Wastegate Duty Trim</div>
<div class="t" style="left:321.5px;top:867.3px;font-size:15.00px;line-height:15.00px;color:#ececec;transform:scaleX(0.8816);">Gear</div>
<div class="a" style="left:174.0px;top:887.0px;width:179.0px;height:53.0px;background:#161616;"></div>
<div class="a" style="left:174.0px;top:887.0px;width:30.0px;height:25.0px;background:#3a8cf2;"></div>
<div class="t" style="left:185.3px;top:892.3px;font-size:15.00px;line-height:15.00px;color:#1d4c8c;">1</div>
<div class="a" style="left:205.0px;top:887.0px;width:29.0px;height:25.0px;background:#8c8c8c;"></div>
<div class="t" style="left:215.3px;top:892.3px;font-size:15.00px;line-height:15.00px;color:#3a3a3a;">2</div>
<div class="a" style="left:235.0px;top:887.0px;width:29.0px;height:25.0px;background:#8c8c8c;"></div>
<div class="t" style="left:245.3px;top:892.3px;font-size:15.00px;line-height:15.00px;color:#3a3a3a;">3</div>
<div class="a" style="left:265.0px;top:887.0px;width:29.0px;height:25.0px;background:#8c8c8c;"></div>
<div class="t" style="left:275.3px;top:892.3px;font-size:15.00px;line-height:15.00px;color:#3a3a3a;">4</div>
<div class="a" style="left:295.0px;top:887.0px;width:29.0px;height:25.0px;background:#8c8c8c;"></div>
<div class="t" style="left:305.3px;top:892.3px;font-size:15.00px;line-height:15.00px;color:#3a3a3a;">5</div>
<div class="a" style="left:325.0px;top:887.0px;width:28.0px;height:25.0px;background:#8c8c8c;"></div>
<div class="t" style="left:334.8px;top:892.3px;font-size:15.00px;line-height:15.00px;color:#3a3a3a;">6</div>
<div class="a" style="left:174.0px;top:912.0px;width:180.0px;height:29.0px;background:#8a8a8a;"></div>
<div class="a" style="left:175.0px;top:913.0px;width:29.0px;height:27.0px;background:#222222;"></div>
<div class="a" style="left:174.0px;top:911.0px;width:30.0px;height:29.5px;background:#e8e0b0;"></div>
<div class="a" style="left:174.0px;top:912.0px;width:30.0px;height:28.5px;background:#0b7f0b;"></div>
<div class="t" style="left:178.0px;top:917.9px;font-size:16.00px;line-height:16.00px;color:#c8f5c0;transform:scaleX(0.8992);">0.0</div>
<div class="a" style="left:205.0px;top:913.0px;width:29.0px;height:27.0px;background:#222222;"></div>
<div class="t" style="left:208.0px;top:917.9px;font-size:16.00px;line-height:16.00px;color:#f0f0f0;transform:scaleX(0.8992);">0.0</div>
<div class="a" style="left:235.0px;top:913.0px;width:29.0px;height:27.0px;background:#222222;"></div>
<div class="t" style="left:238.0px;top:917.9px;font-size:16.00px;line-height:16.00px;color:#f0f0f0;transform:scaleX(0.8992);">0.0</div>
<div class="a" style="left:265.0px;top:913.0px;width:29.0px;height:27.0px;background:#222222;"></div>
<div class="t" style="left:268.0px;top:917.9px;font-size:16.00px;line-height:16.00px;color:#f0f0f0;transform:scaleX(0.8992);">0.0</div>
<div class="a" style="left:295.0px;top:913.0px;width:29.0px;height:27.0px;background:#222222;"></div>
<div class="t" style="left:298.0px;top:917.9px;font-size:16.00px;line-height:16.00px;color:#f0f0f0;transform:scaleX(0.8992);">0.0</div>
<div class="a" style="left:325.0px;top:913.0px;width:28.0px;height:27.0px;background:#222222;"></div>
<div class="t" style="left:327.5px;top:917.9px;font-size:16.00px;line-height:16.00px;color:#f0f0f0;transform:scaleX(0.8992);">0.0</div>
<div class="a" style="left:171.5px;top:911.0px;width:34.2px;height:31.0px;box-sizing:border-box;border:3.75px solid #3a8cf2;"></div>
<div class="a" style="left:676.0px;top:119.0px;width:297.0px;height:81.0px;background:#39393d;"></div>
<div class="a" style="left:677.0px;top:145.0px;width:295.0px;height:54.0px;background:#1f1f20;"></div>
<svg class="a" style="left:936.0px;top:125.0px;" width="14.0" height="14.0" viewBox="0 0 14.0 14.0"><g stroke="#a9a9ad" fill="none"><circle cx="7" cy="7" r="5" stroke-width="1.3"/><path d="M7 0.3 V13.7 M0.3 7 H13.7" stroke-width="1.1"/></g><g fill="#a9a9ad"><path d="M7 0 L8.6 1.8 H5.4 Z"/><path d="M7 14 L8.6 12.2 H5.4 Z"/><path d="M0 7 L1.8 5.4 V8.6 Z"/><path d="M14 7 L12.2 5.4 V8.6 Z"/></g></svg>
<svg class="a" style="left:954.0px;top:125.0px;" width="14.0" height="14.0" viewBox="0 0 14.0 14.0"><path d="M1.5 1.5 L12.5 12.5 M12.5 1.5 L1.5 12.5" stroke="#a9a9ad" stroke-width="2.2"/></svg>
<div class="a" style="left:680.0px;top:168.0px;width:289.0px;height:32.0px;background:#262627;"></div>
<div class="a" style="left:1060.0px;top:95.0px;width:717.0px;height:272.0px;background:#39393d;"></div>
<div class="a" style="left:1061.0px;top:122.0px;width:715.0px;height:244.0px;background:#1f1f20;"></div>
<svg class="a" style="left:1065.5px;top:102.0px;" width="14.0" height="14.0" viewBox="0 0 14.0 14.0"><path d="M0.4 13.6 V6.5 C0.4 2.6 3 0.3 7 0.3 C11 0.3 13.6 2.6 13.6 6.5 V13.6 Z" fill="#a9a9ad"/><path d="M2.6 6.6 C2.6 4.2 4.4 2.7 7 2.7 C9.6 2.7 11.4 4.2 11.4 6.6 V7.2 H2.6 Z" fill="#2a2a2e"/><rect x="5.6" y="10" width="2.8" height="1.7" rx="0.6" fill="#2a2a2e"/></svg>
<svg class="a" style="left:1083.0px;top:101.0px;" width="21.0" height="15.0" viewBox="0 0 21.0 15.0"><path d="M8 0 L8 15 L0.5 7.5 Z" fill="#a9a9ad"/><path d="M11.8 0 L11.8 15 L20.2 7.5 Z" fill="#a9a9ad"/></svg>
<svg class="a" style="left:1107.0px;top:101.0px;" width="15.0" height="15.0" viewBox="0 0 15.0 15.0"><defs><linearGradient id="g11171" x1="0.9" y1="0" x2="0.2" y2="1"><stop offset="0" stop-color="#5da83a"/><stop offset="0.45" stop-color="#a8a82a"/><stop offset="0.75" stop-color="#b86a22"/><stop offset="1" stop-color="#a83a26"/></linearGradient></defs><path d="M4.2 0.8 L13.5 1.6 L12.2 8.2 L7.6 13.2 L0.5 9.6 Z" fill="url(#g11171)"/></svg>
<div class="t" style="left:1321.7px;top:100.8px;font-size:18.00px;line-height:18.00px;color:#ececec;transform:scaleX(1.0170);">Wastegate %DC 1 - Active</div>
<svg class="a" style="left:1740.0px;top:101.5px;" width="14.0" height="14.0" viewBox="0 0 14.0 14.0"><g stroke="#a9a9ad" fill="none"><circle cx="7" cy="7" r="5" stroke-width="1.3"/><path d="M7 0.3 V13.7 M0.3 7 H13.7" stroke-width="1.1"/></g><g fill="#a9a9ad"><path d="M7 0 L8.6 1.8 H5.4 Z"/><path d="M7 14 L8.6 12.2 H5.4 Z"/><path d="M0 7 L1.8 5.4 V8.6 Z"/><path d="M14 7 L12.2 5.4 V8.6 Z"/></g></svg>
<svg class="a" style="left:1758.0px;top:101.5px;" width="14.0" height="14.0" viewBox="0 0 14.0 14.0"><path d="M1.5 1.5 L12.5 12.5 M12.5 1.5 L1.5 12.5" stroke="#a9a9ad" stroke-width="2.2"/></svg>
<div class="t" style="left:1100.6px;top:134.8px;font-size:15.00px;line-height:15.00px;color:#ececec;transform:scaleX(0.8956);">Wastegate %DC 1</div>
<div class="t" style="left:1619.4px;top:134.8px;font-size:15.00px;line-height:15.00px;color:#ececec;transform:scaleX(0.8932);">Engine Speed (RPM)</div>
<div class="a" style="left:1098.0px;top:155.0px;width:653.0px;height:26.0px;background:#161616;"></div>
<div class="a" style="left:1099.0px;top:155.0px;width:38.0px;height:26.0px;background:#8c8c8c;"></div>
<div class="a" style="left:1139.0px;top:155.0px;width:39.0px;height:26.0px;background:#8c8c8c;"></div>
<div class="t" style="left:1154.8px;top:159.8px;font-size:15.00px;line-height:15.00px;color:#3a3a3a;">0</div>
<div class="a" style="left:1180.0px;top:155.0px;width:39.0px;height:26.0px;background:#8c8c8c;"></div>
<div class="t" style="left:1187.5px;top:159.8px;font-size:15.00px;line-height:15.00px;color:#3a3a3a;">500</div>
<div class="a" style="left:1221.0px;top:155.0px;width:39.0px;height:26.0px;background:#8c8c8c;"></div>
<div class="t" style="left:1224.3px;top:159.8px;font-size:15.00px;line-height:15.00px;color:#3a3a3a;">1000</div>
<div class="a" style="left:1262.0px;top:155.0px;width:39.0px;height:26.0px;background:#8c8c8c;"></div>
<div class="t" style="left:1265.3px;top:159.8px;font-size:15.00px;line-height:15.00px;color:#3a3a3a;">1500</div>
<div class="a" style="left:1303.0px;top:155.0px;width:38.0px;height:26.0px;background:#8c8c8c;"></div>
<div class="t" style="left:1305.8px;top:159.8px;font-size:15.00px;line-height:15.00px;color:#3a3a3a;">2000</div>
<div class="a" style="left:1343.0px;top:155.0px;width:39.0px;height:26.0px;background:#8c8c8c;"></div>
<div class="t" style="left:1346.3px;top:159.8px;font-size:15.00px;line-height:15.00px;color:#3a3a3a;">2500</div>
<div class="a" style="left:1384.0px;top:155.0px;width:39.0px;height:26.0px;background:#8c8c8c;"></div>
<div class="t" style="left:1387.3px;top:159.8px;font-size:15.00px;line-height:15.00px;color:#3a3a3a;">3000</div>
<div class="a" style="left:1425.0px;top:155.0px;width:39.0px;height:26.0px;background:#3a8cf2;"></div>
<div class="t" style="left:1428.3px;top:159.8px;font-size:15.00px;line-height:15.00px;color:#1d4c8c;">3500</div>
<div class="a" style="left:1466.0px;top:155.0px;width:38.0px;height:26.0px;background:#8c8c8c;"></div>
<div class="t" style="left:1468.8px;top:159.8px;font-size:15.00px;line-height:15.00px;color:#3a3a3a;">4000</div>
<div class="a" style="left:1506.0px;top:155.0px;width:39.0px;height:26.0px;background:#8c8c8c;"></div>
<div class="t" style="left:1509.3px;top:159.8px;font-size:15.00px;line-height:15.00px;color:#3a3a3a;">4500</div>
<div class="a" style="left:1547.0px;top:155.0px;width:39.0px;height:26.0px;background:#8c8c8c;"></div>
<div class="t" style="left:1550.3px;top:159.8px;font-size:15.00px;line-height:15.00px;color:#3a3a3a;">5000</div>
<div class="a" style="left:1588.0px;top:155.0px;width:39.0px;height:26.0px;background:#8c8c8c;"></div>
<div class="t" style="left:1591.3px;top:159.8px;font-size:15.00px;line-height:15.00px;color:#3a3a3a;">5500</div>
<div class="a" style="left:1629.0px;top:155.0px;width:39.0px;height:26.0px;background:#8c8c8c;"></div>
<div class="t" style="left:1632.3px;top:159.8px;font-size:15.00px;line-height:15.00px;color:#3a3a3a;">6000</div>
<div class="a" style="left:1670.0px;top:155.0px;width:38.0px;height:26.0px;background:#8c8c8c;"></div>
<div class="t" style="left:1672.8px;top:159.8px;font-size:15.00px;line-height:15.00px;color:#3a3a3a;">6500</div>
<div class="a" style="left:1710.0px;top:155.0px;width:39.0px;height:26.0px;background:#8c8c8c;"></div>
<div class="t" style="left:1713.3px;top:159.8px;font-size:15.00px;line-height:15.00px;color:#3a3a3a;">7000</div>
<div class="a" style="left:1098.0px;top:181.0px;width:653.0px;height:166.0px;background:#8a8a8a;"></div>
<div class="a" style="left:1099.0px;top:182.0px;width:39.0px;height:26.0px;background:#222222;"></div>
<div class="t" style="left:1108.8px;top:186.1px;font-size:15.50px;line-height:15.50px;color:#f0f0f0;transform:scaleX(0.9050);">0.0</div>
<div class="a" style="left:1139.0px;top:182.0px;width:40.0px;height:26.0px;background:#222222;"></div>
<div class="t" style="left:1149.2px;top:186.1px;font-size:15.50px;line-height:15.50px;color:#f0f0f0;transform:scaleX(0.9050);">0.0</div>
<div class="a" style="left:1180.0px;top:182.0px;width:40.0px;height:26.0px;background:#222222;"></div>
<div class="t" style="left:1190.2px;top:186.1px;font-size:15.50px;line-height:15.50px;color:#f0f0f0;transform:scaleX(0.9050);">0.0</div>
<div class="a" style="left:1221.0px;top:182.0px;width:40.0px;height:26.0px;background:#222222;"></div>
<div class="t" style="left:1231.2px;top:186.1px;font-size:15.50px;line-height:15.50px;color:#f0f0f0;transform:scaleX(0.9050);">0.0</div>
<div class="a" style="left:1262.0px;top:182.0px;width:40.0px;height:26.0px;background:#222222;"></div>
<div class="t" style="left:1272.2px;top:186.1px;font-size:15.50px;line-height:15.50px;color:#f0f0f0;transform:scaleX(0.9050);">0.0</div>
<div class="a" style="left:1303.0px;top:182.0px;width:39.0px;height:26.0px;background:#222222;"></div>
<div class="t" style="left:1312.8px;top:186.1px;font-size:15.50px;line-height:15.50px;color:#f0f0f0;transform:scaleX(0.9050);">0.0</div>
<div class="a" style="left:1343.0px;top:182.0px;width:40.0px;height:26.0px;background:#222222;"></div>
<div class="t" style="left:1353.2px;top:186.1px;font-size:15.50px;line-height:15.50px;color:#f0f0f0;transform:scaleX(0.9050);">0.0</div>
<div class="a" style="left:1384.0px;top:182.0px;width:40.0px;height:26.0px;background:#222222;"></div>
<div class="t" style="left:1394.2px;top:186.1px;font-size:15.50px;line-height:15.50px;color:#f0f0f0;transform:scaleX(0.9050);">0.0</div>
<div class="a" style="left:1425.0px;top:182.0px;width:40.0px;height:26.0px;background:#222222;"></div>
<div class="t" style="left:1435.2px;top:186.1px;font-size:15.50px;line-height:15.50px;color:#f0f0f0;transform:scaleX(0.9050);">0.0</div>
<div class="a" style="left:1466.0px;top:182.0px;width:39.0px;height:26.0px;background:#222222;"></div>
<div class="t" style="left:1475.8px;top:186.1px;font-size:15.50px;line-height:15.50px;color:#f0f0f0;transform:scaleX(0.9050);">0.0</div>
<div class="a" style="left:1506.0px;top:182.0px;width:40.0px;height:26.0px;background:#222222;"></div>
<div class="t" style="left:1516.2px;top:186.1px;font-size:15.50px;line-height:15.50px;color:#f0f0f0;transform:scaleX(0.9050);">0.0</div>
<div class="a" style="left:1547.0px;top:182.0px;width:40.0px;height:26.0px;background:#222222;"></div>
<div class="t" style="left:1557.2px;top:186.1px;font-size:15.50px;line-height:15.50px;color:#f0f0f0;transform:scaleX(0.9050);">0.0</div>
<div class="a" style="left:1588.0px;top:182.0px;width:40.0px;height:26.0px;background:#222222;"></div>
<div class="t" style="left:1598.2px;top:186.1px;font-size:15.50px;line-height:15.50px;color:#f0f0f0;transform:scaleX(0.9050);">0.0</div>
<div class="a" style="left:1629.0px;top:182.0px;width:40.0px;height:26.0px;background:#222222;"></div>
<div class="t" style="left:1639.2px;top:186.1px;font-size:15.50px;line-height:15.50px;color:#f0f0f0;transform:scaleX(0.9050);">0.0</div>
<div class="a" style="left:1670.0px;top:182.0px;width:39.0px;height:26.0px;background:#222222;"></div>
<div class="t" style="left:1679.8px;top:186.1px;font-size:15.50px;line-height:15.50px;color:#f0f0f0;transform:scaleX(0.9050);">0.0</div>
<div class="a" style="left:1710.0px;top:182.0px;width:40.0px;height:26.0px;background:#222222;"></div>
<div class="t" style="left:1720.2px;top:186.1px;font-size:15.50px;line-height:15.50px;color:#f0f0f0;transform:scaleX(0.9050);">0.0</div>
<div class="a" style="left:1099.0px;top:209.0px;width:39.0px;height:27.0px;background:#222222;"></div>
<div class="t" style="left:1108.8px;top:214.1px;font-size:15.50px;line-height:15.50px;color:#f0f0f0;transform:scaleX(0.9050);">0.0</div>
<div class="a" style="left:1139.0px;top:209.0px;width:40.0px;height:27.0px;background:#222222;"></div>
<div class="t" style="left:1149.2px;top:214.1px;font-size:15.50px;line-height:15.50px;color:#f0f0f0;transform:scaleX(0.9050);">0.0</div>
<div class="a" style="left:1180.0px;top:209.0px;width:40.0px;height:27.0px;background:#222222;"></div>
<div class="t" style="left:1190.2px;top:214.1px;font-size:15.50px;line-height:15.50px;color:#f0f0f0;transform:scaleX(0.9050);">0.0</div>
<div class="a" style="left:1221.0px;top:209.0px;width:40.0px;height:27.0px;background:#222222;"></div>
<div class="t" style="left:1231.2px;top:214.1px;font-size:15.50px;line-height:15.50px;color:#f0f0f0;transform:scaleX(0.9050);">0.0</div>
<div class="a" style="left:1262.0px;top:209.0px;width:40.0px;height:27.0px;background:#222222;"></div>
<div class="t" style="left:1272.2px;top:214.1px;font-size:15.50px;line-height:15.50px;color:#f0f0f0;transform:scaleX(0.9050);">0.0</div>
<div class="a" style="left:1303.0px;top:209.0px;width:39.0px;height:27.0px;background:#222222;"></div>
<div class="t" style="left:1312.8px;top:214.1px;font-size:15.50px;line-height:15.50px;color:#f0f0f0;transform:scaleX(0.9050);">0.0</div>
<div class="a" style="left:1343.0px;top:209.0px;width:40.0px;height:27.0px;background:#222222;"></div>
<div class="t" style="left:1353.2px;top:214.1px;font-size:15.50px;line-height:15.50px;color:#f0f0f0;transform:scaleX(0.9050);">0.0</div>
<div class="a" style="left:1384.0px;top:209.0px;width:40.0px;height:27.0px;background:#222222;"></div>
<div class="t" style="left:1394.2px;top:214.1px;font-size:15.50px;line-height:15.50px;color:#f0f0f0;transform:scaleX(0.9050);">0.0</div>
<div class="a" style="left:1425.0px;top:209.0px;width:40.0px;height:27.0px;background:#222222;"></div>
<div class="t" style="left:1435.2px;top:214.1px;font-size:15.50px;line-height:15.50px;color:#f0f0f0;transform:scaleX(0.9050);">0.0</div>
<div class="a" style="left:1466.0px;top:209.0px;width:39.0px;height:27.0px;background:#222222;"></div>
<div class="t" style="left:1475.8px;top:214.1px;font-size:15.50px;line-height:15.50px;color:#f0f0f0;transform:scaleX(0.9050);">0.0</div>
<div class="a" style="left:1506.0px;top:209.0px;width:40.0px;height:27.0px;background:#222222;"></div>
<div class="t" style="left:1516.2px;top:214.1px;font-size:15.50px;line-height:15.50px;color:#f0f0f0;transform:scaleX(0.9050);">0.0</div>
<div class="a" style="left:1547.0px;top:209.0px;width:40.0px;height:27.0px;background:#222222;"></div>
<div class="t" style="left:1557.2px;top:214.1px;font-size:15.50px;line-height:15.50px;color:#f0f0f0;transform:scaleX(0.9050);">0.0</div>
<div class="a" style="left:1588.0px;top:209.0px;width:40.0px;height:27.0px;background:#222222;"></div>
<div class="t" style="left:1598.2px;top:214.1px;font-size:15.50px;line-height:15.50px;color:#f0f0f0;transform:scaleX(0.9050);">0.0</div>
<div class="a" style="left:1629.0px;top:209.0px;width:40.0px;height:27.0px;background:#222222;"></div>
<div class="t" style="left:1639.2px;top:214.1px;font-size:15.50px;line-height:15.50px;color:#f0f0f0;transform:scaleX(0.9050);">0.0</div>
<div class="a" style="left:1670.0px;top:209.0px;width:39.0px;height:27.0px;background:#222222;"></div>
<div class="t" style="left:1679.8px;top:214.1px;font-size:15.50px;line-height:15.50px;color:#f0f0f0;transform:scaleX(0.9050);">0.0</div>
<div class="a" style="left:1710.0px;top:209.0px;width:40.0px;height:27.0px;background:#222222;"></div>
<div class="t" style="left:1720.2px;top:214.1px;font-size:15.50px;line-height:15.50px;color:#f0f0f0;transform:scaleX(0.9050);">0.0</div>
<div class="a" style="left:1099.0px;top:237.0px;width:39.0px;height:26.0px;background:#222222;"></div>
<div class="t" style="left:1108.8px;top:241.1px;font-size:15.50px;line-height:15.50px;color:#f0f0f0;transform:scaleX(0.9050);">0.0</div>
<div class="a" style="left:1139.0px;top:237.0px;width:40.0px;height:26.0px;background:#222222;"></div>
<div class="t" style="left:1149.2px;top:241.1px;font-size:15.50px;line-height:15.50px;color:#f0f0f0;transform:scaleX(0.9050);">0.0</div>
<div class="a" style="left:1180.0px;top:237.0px;width:40.0px;height:26.0px;background:#222222;"></div>
<div class="t" style="left:1190.2px;top:241.1px;font-size:15.50px;line-height:15.50px;color:#f0f0f0;transform:scaleX(0.9050);">0.0</div>
<div class="a" style="left:1221.0px;top:237.0px;width:40.0px;height:26.0px;background:#222222;"></div>
<div class="t" style="left:1231.2px;top:241.1px;font-size:15.50px;line-height:15.50px;color:#f0f0f0;transform:scaleX(0.9050);">0.0</div>
<div class="a" style="left:1262.0px;top:237.0px;width:40.0px;height:26.0px;background:#222222;"></div>
<div class="t" style="left:1272.2px;top:241.1px;font-size:15.50px;line-height:15.50px;color:#f0f0f0;transform:scaleX(0.9050);">0.0</div>
<div class="a" style="left:1303.0px;top:237.0px;width:39.0px;height:26.0px;background:#222222;"></div>
<div class="t" style="left:1312.8px;top:241.1px;font-size:15.50px;line-height:15.50px;color:#f0f0f0;transform:scaleX(0.9050);">0.0</div>
<div class="a" style="left:1343.0px;top:237.0px;width:40.0px;height:26.0px;background:#222222;"></div>
<div class="t" style="left:1353.2px;top:241.1px;font-size:15.50px;line-height:15.50px;color:#f0f0f0;transform:scaleX(0.9050);">0.0</div>
<div class="a" style="left:1384.0px;top:237.0px;width:40.0px;height:26.0px;background:#222222;"></div>
<div class="t" style="left:1394.2px;top:241.1px;font-size:15.50px;line-height:15.50px;color:#f0f0f0;transform:scaleX(0.9050);">0.0</div>
<div class="a" style="left:1425.0px;top:237.0px;width:40.0px;height:26.0px;background:#222222;"></div>
<div class="t" style="left:1435.2px;top:241.1px;font-size:15.50px;line-height:15.50px;color:#f0f0f0;transform:scaleX(0.9050);">0.0</div>
<div class="a" style="left:1466.0px;top:237.0px;width:39.0px;height:26.0px;background:#222222;"></div>
<div class="t" style="left:1475.8px;top:241.1px;font-size:15.50px;line-height:15.50px;color:#f0f0f0;transform:scaleX(0.9050);">0.0</div>
<div class="a" style="left:1506.0px;top:237.0px;width:40.0px;height:26.0px;background:#222222;"></div>
<div class="t" style="left:1516.2px;top:241.1px;font-size:15.50px;line-height:15.50px;color:#f0f0f0;transform:scaleX(0.9050);">0.0</div>
<div class="a" style="left:1547.0px;top:237.0px;width:40.0px;height:26.0px;background:#222222;"></div>
<div class="t" style="left:1557.2px;top:241.1px;font-size:15.50px;line-height:15.50px;color:#f0f0f0;transform:scaleX(0.9050);">0.0</div>
<div class="a" style="left:1588.0px;top:237.0px;width:40.0px;height:26.0px;background:#222222;"></div>
<div class="t" style="left:1598.2px;top:241.1px;font-size:15.50px;line-height:15.50px;color:#f0f0f0;transform:scaleX(0.9050);">0.0</div>
<div class="a" style="left:1629.0px;top:237.0px;width:40.0px;height:26.0px;background:#222222;"></div>
<div class="t" style="left:1639.2px;top:241.1px;font-size:15.50px;line-height:15.50px;color:#f0f0f0;transform:scaleX(0.9050);">0.0</div>
<div class="a" style="left:1670.0px;top:237.0px;width:39.0px;height:26.0px;background:#222222;"></div>
<div class="t" style="left:1679.8px;top:241.1px;font-size:15.50px;line-height:15.50px;color:#f0f0f0;transform:scaleX(0.9050);">0.0</div>
<div class="a" style="left:1710.0px;top:237.0px;width:40.0px;height:26.0px;background:#222222;"></div>
<div class="t" style="left:1720.2px;top:241.1px;font-size:15.50px;line-height:15.50px;color:#f0f0f0;transform:scaleX(0.9050);">0.0</div>
<div class="a" style="left:1099.0px;top:264.0px;width:39.0px;height:27.0px;background:#222222;"></div>
<div class="t" style="left:1108.8px;top:269.1px;font-size:15.50px;line-height:15.50px;color:#f0f0f0;transform:scaleX(0.9050);">0.0</div>
<div class="a" style="left:1139.0px;top:264.0px;width:40.0px;height:27.0px;background:#222222;"></div>
<div class="t" style="left:1149.2px;top:269.1px;font-size:15.50px;line-height:15.50px;color:#f0f0f0;transform:scaleX(0.9050);">0.0</div>
<div class="a" style="left:1180.0px;top:264.0px;width:40.0px;height:27.0px;background:#222222;"></div>
<div class="t" style="left:1190.2px;top:269.1px;font-size:15.50px;line-height:15.50px;color:#f0f0f0;transform:scaleX(0.9050);">0.0</div>
<div class="a" style="left:1221.0px;top:264.0px;width:40.0px;height:27.0px;background:#222222;"></div>
<div class="t" style="left:1231.2px;top:269.1px;font-size:15.50px;line-height:15.50px;color:#f0f0f0;transform:scaleX(0.9050);">0.0</div>
<div class="a" style="left:1262.0px;top:264.0px;width:40.0px;height:27.0px;background:#222222;"></div>
<div class="t" style="left:1272.2px;top:269.1px;font-size:15.50px;line-height:15.50px;color:#f0f0f0;transform:scaleX(0.9050);">0.0</div>
<div class="a" style="left:1303.0px;top:264.0px;width:39.0px;height:27.0px;background:#222222;"></div>
<div class="t" style="left:1312.8px;top:269.1px;font-size:15.50px;line-height:15.50px;color:#f0f0f0;transform:scaleX(0.9050);">0.0</div>
<div class="a" style="left:1343.0px;top:264.0px;width:40.0px;height:27.0px;background:#222222;"></div>
<div class="t" style="left:1353.2px;top:269.1px;font-size:15.50px;line-height:15.50px;color:#f0f0f0;transform:scaleX(0.9050);">0.0</div>
<div class="a" style="left:1384.0px;top:264.0px;width:40.0px;height:27.0px;background:#222222;"></div>
<div class="t" style="left:1394.2px;top:269.1px;font-size:15.50px;line-height:15.50px;color:#f0f0f0;transform:scaleX(0.9050);">0.0</div>
<div class="a" style="left:1425.0px;top:264.0px;width:40.0px;height:27.0px;background:#222222;"></div>
<div class="t" style="left:1435.2px;top:269.1px;font-size:15.50px;line-height:15.50px;color:#f0f0f0;transform:scaleX(0.9050);">0.0</div>
<div class="a" style="left:1466.0px;top:264.0px;width:39.0px;height:27.0px;background:#222222;"></div>
<div class="t" style="left:1475.8px;top:269.1px;font-size:15.50px;line-height:15.50px;color:#f0f0f0;transform:scaleX(0.9050);">0.0</div>
<div class="a" style="left:1506.0px;top:264.0px;width:40.0px;height:27.0px;background:#222222;"></div>
<div class="t" style="left:1516.2px;top:269.1px;font-size:15.50px;line-height:15.50px;color:#f0f0f0;transform:scaleX(0.9050);">0.0</div>
<div class="a" style="left:1547.0px;top:264.0px;width:40.0px;height:27.0px;background:#222222;"></div>
<div class="t" style="left:1557.2px;top:269.1px;font-size:15.50px;line-height:15.50px;color:#f0f0f0;transform:scaleX(0.9050);">0.0</div>
<div class="a" style="left:1588.0px;top:264.0px;width:40.0px;height:27.0px;background:#222222;"></div>
<div class="t" style="left:1598.2px;top:269.1px;font-size:15.50px;line-height:15.50px;color:#f0f0f0;transform:scaleX(0.9050);">0.0</div>
<div class="a" style="left:1629.0px;top:264.0px;width:40.0px;height:27.0px;background:#222222;"></div>
<div class="t" style="left:1639.2px;top:269.1px;font-size:15.50px;line-height:15.50px;color:#f0f0f0;transform:scaleX(0.9050);">0.0</div>
<div class="a" style="left:1670.0px;top:264.0px;width:39.0px;height:27.0px;background:#222222;"></div>
<div class="t" style="left:1679.8px;top:269.1px;font-size:15.50px;line-height:15.50px;color:#f0f0f0;transform:scaleX(0.9050);">0.0</div>
<div class="a" style="left:1710.0px;top:264.0px;width:40.0px;height:27.0px;background:#222222;"></div>
<div class="t" style="left:1720.2px;top:269.1px;font-size:15.50px;line-height:15.50px;color:#f0f0f0;transform:scaleX(0.9050);">0.0</div>
<div class="a" style="left:1099.0px;top:292.0px;width:39.0px;height:26.0px;background:#222222;"></div>
<div class="t" style="left:1108.8px;top:296.1px;font-size:15.50px;line-height:15.50px;color:#f0f0f0;transform:scaleX(0.9050);">0.0</div>
<div class="a" style="left:1139.0px;top:292.0px;width:40.0px;height:26.0px;background:#222222;"></div>
<div class="t" style="left:1149.2px;top:296.1px;font-size:15.50px;line-height:15.50px;color:#f0f0f0;transform:scaleX(0.9050);">0.0</div>
<div class="a" style="left:1180.0px;top:292.0px;width:40.0px;height:26.0px;background:#222222;"></div>
<div class="t" style="left:1190.2px;top:296.1px;font-size:15.50px;line-height:15.50px;color:#f0f0f0;transform:scaleX(0.9050);">0.0</div>
<div class="a" style="left:1221.0px;top:292.0px;width:40.0px;height:26.0px;background:#222222;"></div>
<div class="t" style="left:1231.2px;top:296.1px;font-size:15.50px;line-height:15.50px;color:#f0f0f0;transform:scaleX(0.9050);">0.0</div>
<div class="a" style="left:1262.0px;top:292.0px;width:40.0px;height:26.0px;background:#222222;"></div>
<div class="t" style="left:1272.2px;top:296.1px;font-size:15.50px;line-height:15.50px;color:#f0f0f0;transform:scaleX(0.9050);">0.0</div>
<div class="a" style="left:1303.0px;top:292.0px;width:39.0px;height:26.0px;background:#222222;"></div>
<div class="t" style="left:1312.8px;top:296.1px;font-size:15.50px;line-height:15.50px;color:#f0f0f0;transform:scaleX(0.9050);">0.0</div>
<div class="a" style="left:1343.0px;top:292.0px;width:40.0px;height:26.0px;background:#222222;"></div>
<div class="t" style="left:1353.2px;top:296.1px;font-size:15.50px;line-height:15.50px;color:#f0f0f0;transform:scaleX(0.9050);">0.0</div>
<div class="a" style="left:1384.0px;top:292.0px;width:40.0px;height:26.0px;background:#222222;"></div>
<div class="t" style="left:1394.2px;top:296.1px;font-size:15.50px;line-height:15.50px;color:#f0f0f0;transform:scaleX(0.9050);">0.0</div>
<div class="a" style="left:1425.0px;top:292.0px;width:40.0px;height:26.0px;background:#222222;"></div>
<div class="t" style="left:1435.2px;top:296.1px;font-size:15.50px;line-height:15.50px;color:#f0f0f0;transform:scaleX(0.9050);">0.0</div>
<div class="a" style="left:1466.0px;top:292.0px;width:39.0px;height:26.0px;background:#222222;"></div>
<div class="t" style="left:1475.8px;top:296.1px;font-size:15.50px;line-height:15.50px;color:#f0f0f0;transform:scaleX(0.9050);">0.0</div>
<div class="a" style="left:1506.0px;top:292.0px;width:40.0px;height:26.0px;background:#222222;"></div>
<div class="t" style="left:1516.2px;top:296.1px;font-size:15.50px;line-height:15.50px;color:#f0f0f0;transform:scaleX(0.9050);">0.0</div>
<div class="a" style="left:1547.0px;top:292.0px;width:40.0px;height:26.0px;background:#222222;"></div>
<div class="t" style="left:1557.2px;top:296.1px;font-size:15.50px;line-height:15.50px;color:#f0f0f0;transform:scaleX(0.9050);">0.0</div>
<div class="a" style="left:1588.0px;top:292.0px;width:40.0px;height:26.0px;background:#222222;"></div>
<div class="t" style="left:1598.2px;top:296.1px;font-size:15.50px;line-height:15.50px;color:#f0f0f0;transform:scaleX(0.9050);">0.0</div>
<div class="a" style="left:1629.0px;top:292.0px;width:40.0px;height:26.0px;background:#222222;"></div>
<div class="t" style="left:1639.2px;top:296.1px;font-size:15.50px;line-height:15.50px;color:#f0f0f0;transform:scaleX(0.9050);">0.0</div>
<div class="a" style="left:1670.0px;top:292.0px;width:39.0px;height:26.0px;background:#222222;"></div>
<div class="t" style="left:1679.8px;top:296.1px;font-size:15.50px;line-height:15.50px;color:#f0f0f0;transform:scaleX(0.9050);">0.0</div>
<div class="a" style="left:1710.0px;top:292.0px;width:40.0px;height:26.0px;background:#222222;"></div>
<div class="t" style="left:1720.2px;top:296.1px;font-size:15.50px;line-height:15.50px;color:#f0f0f0;transform:scaleX(0.9050);">0.0</div>
<div class="a" style="left:1099.0px;top:319.0px;width:39.0px;height:27.0px;background:#222222;"></div>
<div class="t" style="left:1108.8px;top:324.1px;font-size:15.50px;line-height:15.50px;color:#f0f0f0;transform:scaleX(0.9050);">0.0</div>
<div class="a" style="left:1139.0px;top:319.0px;width:40.0px;height:27.0px;background:#222222;"></div>
<div class="t" style="left:1149.2px;top:324.1px;font-size:15.50px;line-height:15.50px;color:#f0f0f0;transform:scaleX(0.9050);">0.0</div>
<div class="a" style="left:1180.0px;top:319.0px;width:40.0px;height:27.0px;background:#222222;"></div>
<div class="t" style="left:1190.2px;top:324.1px;font-size:15.50px;line-height:15.50px;color:#f0f0f0;transform:scaleX(0.9050);">0.0</div>
<div class="a" style="left:1221.0px;top:319.0px;width:40.0px;height:27.0px;background:#222222;"></div>
<div class="t" style="left:1231.2px;top:324.1px;font-size:15.50px;line-height:15.50px;color:#f0f0f0;transform:scaleX(0.9050);">0.0</div>
<div class="a" style="left:1262.0px;top:319.0px;width:40.0px;height:27.0px;background:#222222;"></div>
<div class="t" style="left:1272.2px;top:324.1px;font-size:15.50px;line-height:15.50px;color:#f0f0f0;transform:scaleX(0.9050);">0.0</div>
<div class="a" style="left:1303.0px;top:319.0px;width:39.0px;height:27.0px;background:#222222;"></div>
<div class="t" style="left:1312.8px;top:324.1px;font-size:15.50px;line-height:15.50px;color:#f0f0f0;transform:scaleX(0.9050);">0.0</div>
<div class="a" style="left:1343.0px;top:319.0px;width:40.0px;height:27.0px;background:#222222;"></div>
<div class="t" style="left:1353.2px;top:324.1px;font-size:15.50px;line-height:15.50px;color:#f0f0f0;transform:scaleX(0.9050);">0.0</div>
<div class="a" style="left:1384.0px;top:319.0px;width:40.0px;height:27.0px;background:#222222;"></div>
<div class="t" style="left:1394.2px;top:324.1px;font-size:15.50px;line-height:15.50px;color:#f0f0f0;transform:scaleX(0.9050);">0.0</div>
<div class="a" style="left:1425.0px;top:319.0px;width:40.0px;height:27.0px;background:#222222;"></div>
<div class="t" style="left:1435.2px;top:324.1px;font-size:15.50px;line-height:15.50px;color:#f0f0f0;transform:scaleX(0.9050);">0.0</div>
<div class="a" style="left:1466.0px;top:319.0px;width:39.0px;height:27.0px;background:#222222;"></div>
<div class="t" style="left:1475.8px;top:324.1px;font-size:15.50px;line-height:15.50px;color:#f0f0f0;transform:scaleX(0.9050);">0.0</div>
<div class="a" style="left:1506.0px;top:319.0px;width:40.0px;height:27.0px;background:#222222;"></div>
<div class="t" style="left:1516.2px;top:324.1px;font-size:15.50px;line-height:15.50px;color:#f0f0f0;transform:scaleX(0.9050);">0.0</div>
<div class="a" style="left:1547.0px;top:319.0px;width:40.0px;height:27.0px;background:#222222;"></div>
<div class="t" style="left:1557.2px;top:324.1px;font-size:15.50px;line-height:15.50px;color:#f0f0f0;transform:scaleX(0.9050);">0.0</div>
<div class="a" style="left:1588.0px;top:319.0px;width:40.0px;height:27.0px;background:#222222;"></div>
<div class="t" style="left:1598.2px;top:324.1px;font-size:15.50px;line-height:15.50px;color:#f0f0f0;transform:scaleX(0.9050);">0.0</div>
<div class="a" style="left:1629.0px;top:319.0px;width:40.0px;height:27.0px;background:#222222;"></div>
<div class="t" style="left:1639.2px;top:324.1px;font-size:15.50px;line-height:15.50px;color:#f0f0f0;transform:scaleX(0.9050);">0.0</div>
<div class="a" style="left:1670.0px;top:319.0px;width:39.0px;height:27.0px;background:#222222;"></div>
<div class="t" style="left:1679.8px;top:324.1px;font-size:15.50px;line-height:15.50px;color:#f0f0f0;transform:scaleX(0.9050);">0.0</div>
<div class="a" style="left:1710.0px;top:319.0px;width:40.0px;height:27.0px;background:#222222;"></div>
<div class="t" style="left:1720.2px;top:324.1px;font-size:15.50px;line-height:15.50px;color:#f0f0f0;transform:scaleX(0.9050);">0.0</div>
<div class="a" style="left:1312.0px;top:216.0px;width:439.0px;height:1.8px;background:#f2f21a;"></div>
<div class="a" style="left:1270.0px;top:201.5px;width:43.0px;height:29.0px;box-sizing:border-box;border:2.5px solid #f2f21a;"></div>
<div class="a" style="left:1290.0px;top:182.0px;width:1.5px;height:164.0px;background:#f2f21a;"></div>
<div class="a" style="left:1422.0px;top:316.5px;width:44.5px;height:31.0px;box-sizing:border-box;border:3.5px solid #3a8cf2;"></div>
<div class="a" style="left:1756.0px;top:180.0px;width:17.0px;height:170.0px;background:#141414;"></div>
<div class="a" style="left:1757.0px;top:181.0px;width:15.0px;height:168.0px;background:#1b1b1b;"></div>
<div class="a" style="left:1758.0px;top:205.0px;width:13.0px;height:80.0px;background:#2c2c2e;"></div>
<svg class="a" style="left:1759.0px;top:183.0px;" width="11.0" height="8.0" viewBox="0 0 11.0 8.0"><path d="M0 7 L5.5 1 L11 7 Z" fill="#333"/></svg>
<svg class="a" style="left:1759.0px;top:340.0px;" width="11.0" height="8.0" viewBox="0 0 11.0 8.0"><path d="M0 1 L5.5 7 L11 1 Z" fill="#333"/></svg>
<div class="a" style="left:1060.0px;top:371.0px;width:717.0px;height:261.0px;background:#39393d;"></div>
<div class="a" style="left:1061.0px;top:397.5px;width:715.0px;height:233.5px;background:#1f1f20;"></div>
<svg class="a" style="left:1065.5px;top:377.8px;" width="14.0" height="14.0" viewBox="0 0 14.0 14.0"><path d="M0.4 13.6 V6.5 C0.4 2.6 3 0.3 7 0.3 C11 0.3 13.6 2.6 13.6 6.5 V13.6 Z" fill="#a9a9ad"/><path d="M2.6 6.6 C2.6 4.2 4.4 2.7 7 2.7 C9.6 2.7 11.4 4.2 11.4 6.6 V7.2 H2.6 Z" fill="#2a2a2e"/><rect x="5.6" y="10" width="2.8" height="1.7" rx="0.6" fill="#2a2a2e"/></svg>
<svg class="a" style="left:1083.0px;top:376.8px;" width="21.0" height="15.0" viewBox="0 0 21.0 15.0"><path d="M8 0 L8 15 L0.5 7.5 Z" fill="#a9a9ad"/><path d="M11.8 0 L11.8 15 L20.2 7.5 Z" fill="#a9a9ad"/></svg>
<svg class="a" style="left:1107.0px;top:376.8px;" width="15.0" height="15.0" viewBox="0 0 15.0 15.0"><defs><linearGradient id="g11446" x1="0.9" y1="0" x2="0.2" y2="1"><stop offset="0" stop-color="#5da83a"/><stop offset="0.45" stop-color="#a8a82a"/><stop offset="0.75" stop-color="#b86a22"/><stop offset="1" stop-color="#a83a26"/></linearGradient></defs><path d="M4.2 0.8 L13.5 1.6 L12.2 8.2 L7.6 13.2 L0.5 9.6 Z" fill="url(#g11446)"/></svg>
<div class="t" style="left:1315.6px;top:376.8px;font-size:18.00px;line-height:18.00px;color:#ececec;transform:scaleX(1.0145);">Wastegate %DC 2 - Inactive</div>
<svg class="a" style="left:1740.0px;top:377.2px;" width="14.0" height="14.0" viewBox="0 0 14.0 14.0"><g stroke="#a9a9ad" fill="none"><circle cx="7" cy="7" r="5" stroke-width="1.3"/><path d="M7 0.3 V13.7 M0.3 7 H13.7" stroke-width="1.1"/></g><g fill="#a9a9ad"><path d="M7 0 L8.6 1.8 H5.4 Z"/><path d="M7 14 L8.6 12.2 H5.4 Z"/><path d="M0 7 L1.8 5.4 V8.6 Z"/><path d="M14 7 L12.2 5.4 V8.6 Z"/></g></svg>
<svg class="a" style="left:1758.0px;top:377.2px;" width="14.0" height="14.0" viewBox="0 0 14.0 14.0"><path d="M1.5 1.5 L12.5 12.5 M12.5 1.5 L1.5 12.5" stroke="#a9a9ad" stroke-width="2.2"/></svg>
<div class="t" style="left:1619.4px;top:410.8px;font-size:15.00px;line-height:15.00px;color:#ececec;transform:scaleX(0.8932);">Engine Speed (RPM)</div>
<div class="a" style="left:1098.0px;top:431.0px;width:653.0px;height:25.0px;background:#161616;"></div>
<div class="a" style="left:1099.0px;top:431.0px;width:38.0px;height:25.0px;background:#8c8c8c;"></div>
<div class="a" style="left:1139.0px;top:431.0px;width:39.0px;height:25.0px;background:#8c8c8c;"></div>
<div class="t" style="left:1154.8px;top:435.6px;font-size:15.00px;line-height:15.00px;color:#3a3a3a;">0</div>
<div class="a" style="left:1180.0px;top:431.0px;width:39.0px;height:25.0px;background:#8c8c8c;"></div>
<div class="t" style="left:1187.5px;top:435.6px;font-size:15.00px;line-height:15.00px;color:#3a3a3a;">500</div>
<div class="a" style="left:1221.0px;top:431.0px;width:39.0px;height:25.0px;background:#8c8c8c;"></div>
<div class="t" style="left:1224.3px;top:435.6px;font-size:15.00px;line-height:15.00px;color:#3a3a3a;">1000</div>
<div class="a" style="left:1262.0px;top:431.0px;width:39.0px;height:25.0px;background:#8c8c8c;"></div>
<div class="t" style="left:1265.3px;top:435.6px;font-size:15.00px;line-height:15.00px;color:#3a3a3a;">1500</div>
<div class="a" style="left:1303.0px;top:431.0px;width:38.0px;height:25.0px;background:#8c8c8c;"></div>
<div class="t" style="left:1305.8px;top:435.6px;font-size:15.00px;line-height:15.00px;color:#3a3a3a;">2000</div>
<div class="a" style="left:1343.0px;top:431.0px;width:39.0px;height:25.0px;background:#8c8c8c;"></div>
<div class="t" style="left:1346.3px;top:435.6px;font-size:15.00px;line-height:15.00px;color:#3a3a3a;">2500</div>
<div class="a" style="left:1384.0px;top:431.0px;width:39.0px;height:25.0px;background:#8c8c8c;"></div>
<div class="t" style="left:1387.3px;top:435.6px;font-size:15.00px;line-height:15.00px;color:#3a3a3a;">3000</div>
<div class="a" style="left:1425.0px;top:431.0px;width:39.0px;height:25.0px;background:#8c8c8c;"></div>
<div class="t" style="left:1428.3px;top:435.6px;font-size:15.00px;line-height:15.00px;color:#3a3a3a;">3500</div>
<div class="a" style="left:1466.0px;top:431.0px;width:38.0px;height:25.0px;background:#8c8c8c;"></div>
<div class="t" style="left:1468.8px;top:435.6px;font-size:15.00px;line-height:15.00px;color:#3a3a3a;">4000</div>
<div class="a" style="left:1506.0px;top:431.0px;width:39.0px;height:25.0px;background:#8c8c8c;"></div>
<div class="t" style="left:1509.3px;top:435.6px;font-size:15.00px;line-height:15.00px;color:#3a3a3a;">4500</div>
<div class="a" style="left:1547.0px;top:431.0px;width:39.0px;height:25.0px;background:#8c8c8c;"></div>
<div class="t" style="left:1550.3px;top:435.6px;font-size:15.00px;line-height:15.00px;color:#3a3a3a;">5000</div>
<div class="a" style="left:1588.0px;top:431.0px;width:39.0px;height:25.0px;background:#8c8c8c;"></div>
<div class="t" style="left:1591.3px;top:435.6px;font-size:15.00px;line-height:15.00px;color:#3a3a3a;">5500</div>
<div class="a" style="left:1629.0px;top:431.0px;width:39.0px;height:25.0px;background:#8c8c8c;"></div>
<div class="t" style="left:1632.3px;top:435.6px;font-size:15.00px;line-height:15.00px;color:#3a3a3a;">6000</div>
<div class="a" style="left:1670.0px;top:431.0px;width:38.0px;height:25.0px;background:#8c8c8c;"></div>
<div class="t" style="left:1672.8px;top:435.6px;font-size:15.00px;line-height:15.00px;color:#3a3a3a;">6500</div>
<div class="a" style="left:1710.0px;top:431.0px;width:39.0px;height:25.0px;background:#8c8c8c;"></div>
<div class="t" style="left:1713.3px;top:435.6px;font-size:15.00px;line-height:15.00px;color:#3a3a3a;">7000</div>
<div class="a" style="left:1098.0px;top:456.0px;width:653.0px;height:168.0px;background:#8a8a8a;"></div>
<div class="a" style="left:1099.0px;top:457.0px;width:39.0px;height:27.0px;background:#222222;"></div>
<div class="t" style="left:1108.8px;top:462.1px;font-size:15.50px;line-height:15.50px;color:#f0f0f0;transform:scaleX(0.9050);">0.0</div>
<div class="a" style="left:1139.0px;top:457.0px;width:40.0px;height:27.0px;background:#222222;"></div>
<div class="t" style="left:1149.2px;top:462.1px;font-size:15.50px;line-height:15.50px;color:#f0f0f0;transform:scaleX(0.9050);">0.0</div>
<div class="a" style="left:1180.0px;top:457.0px;width:40.0px;height:27.0px;background:#222222;"></div>
<div class="t" style="left:1190.2px;top:462.1px;font-size:15.50px;line-height:15.50px;color:#f0f0f0;transform:scaleX(0.9050);">0.0</div>
<div class="a" style="left:1221.0px;top:457.0px;width:40.0px;height:27.0px;background:#222222;"></div>
<div class="t" style="left:1231.2px;top:462.1px;font-size:15.50px;line-height:15.50px;color:#f0f0f0;transform:scaleX(0.9050);">0.0</div>
<div class="a" style="left:1262.0px;top:457.0px;width:40.0px;height:27.0px;background:#222222;"></div>
<div class="t" style="left:1272.2px;top:462.1px;font-size:15.50px;line-height:15.50px;color:#f0f0f0;transform:scaleX(0.9050);">0.0</div>
<div class="a" style="left:1303.0px;top:457.0px;width:39.0px;height:27.0px;background:#222222;"></div>
<div class="t" style="left:1312.8px;top:462.1px;font-size:15.50px;line-height:15.50px;color:#f0f0f0;transform:scaleX(0.9050);">0.0</div>
<div class="a" style="left:1343.0px;top:457.0px;width:40.0px;height:27.0px;background:#222222;"></div>
<div class="t" style="left:1353.2px;top:462.1px;font-size:15.50px;line-height:15.50px;color:#f0f0f0;transform:scaleX(0.9050);">0.0</div>
<div class="a" style="left:1384.0px;top:457.0px;width:40.0px;height:27.0px;background:#222222;"></div>
<div class="t" style="left:1394.2px;top:462.1px;font-size:15.50px;line-height:15.50px;color:#f0f0f0;transform:scaleX(0.9050);">0.0</div>
<div class="a" style="left:1425.0px;top:457.0px;width:40.0px;height:27.0px;background:#222222;"></div>
<div class="t" style="left:1435.2px;top:462.1px;font-size:15.50px;line-height:15.50px;color:#f0f0f0;transform:scaleX(0.9050);">0.0</div>
<div class="a" style="left:1466.0px;top:457.0px;width:39.0px;height:27.0px;background:#222222;"></div>
<div class="t" style="left:1475.8px;top:462.1px;font-size:15.50px;line-height:15.50px;color:#f0f0f0;transform:scaleX(0.9050);">0.0</div>
<div class="a" style="left:1506.0px;top:457.0px;width:40.0px;height:27.0px;background:#222222;"></div>
<div class="t" style="left:1516.2px;top:462.1px;font-size:15.50px;line-height:15.50px;color:#f0f0f0;transform:scaleX(0.9050);">0.0</div>
<div class="a" style="left:1547.0px;top:457.0px;width:40.0px;height:27.0px;background:#222222;"></div>
<div class="t" style="left:1557.2px;top:462.1px;font-size:15.50px;line-height:15.50px;color:#f0f0f0;transform:scaleX(0.9050);">0.0</div>
<div class="a" style="left:1588.0px;top:457.0px;width:40.0px;height:27.0px;background:#222222;"></div>
<div class="t" style="left:1598.2px;top:462.1px;font-size:15.50px;line-height:15.50px;color:#f0f0f0;transform:scaleX(0.9050);">0.0</div>
<div class="a" style="left:1629.0px;top:457.0px;width:40.0px;height:27.0px;background:#222222;"></div>
<div class="t" style="left:1639.2px;top:462.1px;font-size:15.50px;line-height:15.50px;color:#f0f0f0;transform:scaleX(0.9050);">0.0</div>
<div class="a" style="left:1670.0px;top:457.0px;width:39.0px;height:27.0px;background:#222222;"></div>
<div class="t" style="left:1679.8px;top:462.1px;font-size:15.50px;line-height:15.50px;color:#f0f0f0;transform:scaleX(0.9050);">0.0</div>
<div class="a" style="left:1710.0px;top:457.0px;width:40.0px;height:27.0px;background:#222222;"></div>
<div class="t" style="left:1720.2px;top:462.1px;font-size:15.50px;line-height:15.50px;color:#f0f0f0;transform:scaleX(0.9050);">0.0</div>
<div class="a" style="left:1099.0px;top:485.0px;width:39.0px;height:27.0px;background:#222222;"></div>
<div class="t" style="left:1108.8px;top:490.1px;font-size:15.50px;line-height:15.50px;color:#f0f0f0;transform:scaleX(0.9050);">0.0</div>
<div class="a" style="left:1139.0px;top:485.0px;width:40.0px;height:27.0px;background:#222222;"></div>
<div class="t" style="left:1149.2px;top:490.1px;font-size:15.50px;line-height:15.50px;color:#f0f0f0;transform:scaleX(0.9050);">0.0</div>
<div class="a" style="left:1180.0px;top:485.0px;width:40.0px;height:27.0px;background:#222222;"></div>
<div class="t" style="left:1190.2px;top:490.1px;font-size:15.50px;line-height:15.50px;color:#f0f0f0;transform:scaleX(0.9050);">0.0</div>
<div class="a" style="left:1221.0px;top:485.0px;width:40.0px;height:27.0px;background:#222222;"></div>
<div class="t" style="left:1231.2px;top:490.1px;font-size:15.50px;line-height:15.50px;color:#f0f0f0;transform:scaleX(0.9050);">0.0</div>
<div class="a" style="left:1262.0px;top:485.0px;width:40.0px;height:27.0px;background:#222222;"></div>
<div class="t" style="left:1272.2px;top:490.1px;font-size:15.50px;line-height:15.50px;color:#f0f0f0;transform:scaleX(0.9050);">0.0</div>
<div class="a" style="left:1303.0px;top:485.0px;width:39.0px;height:27.0px;background:#222222;"></div>
<div class="t" style="left:1312.8px;top:490.1px;font-size:15.50px;line-height:15.50px;color:#f0f0f0;transform:scaleX(0.9050);">0.0</div>
<div class="a" style="left:1343.0px;top:485.0px;width:40.0px;height:27.0px;background:#222222;"></div>
<div class="t" style="left:1353.2px;top:490.1px;font-size:15.50px;line-height:15.50px;color:#f0f0f0;transform:scaleX(0.9050);">0.0</div>
<div class="a" style="left:1384.0px;top:485.0px;width:40.0px;height:27.0px;background:#222222;"></div>
<div class="t" style="left:1394.2px;top:490.1px;font-size:15.50px;line-height:15.50px;color:#f0f0f0;transform:scaleX(0.9050);">0.0</div>
<div class="a" style="left:1425.0px;top:485.0px;width:40.0px;height:27.0px;background:#222222;"></div>
<div class="t" style="left:1435.2px;top:490.1px;font-size:15.50px;line-height:15.50px;color:#f0f0f0;transform:scaleX(0.9050);">0.0</div>
<div class="a" style="left:1466.0px;top:485.0px;width:39.0px;height:27.0px;background:#222222;"></div>
<div class="t" style="left:1475.8px;top:490.1px;font-size:15.50px;line-height:15.50px;color:#f0f0f0;transform:scaleX(0.9050);">0.0</div>
<div class="a" style="left:1506.0px;top:485.0px;width:40.0px;height:27.0px;background:#222222;"></div>
<div class="t" style="left:1516.2px;top:490.1px;font-size:15.50px;line-height:15.50px;color:#f0f0f0;transform:scaleX(0.9050);">0.0</div>
<div class="a" style="left:1547.0px;top:485.0px;width:40.0px;height:27.0px;background:#222222;"></div>
<div class="t" style="left:1557.2px;top:490.1px;font-size:15.50px;line-height:15.50px;color:#f0f0f0;transform:scaleX(0.9050);">0.0</div>
<div class="a" style="left:1588.0px;top:485.0px;width:40.0px;height:27.0px;background:#222222;"></div>
<div class="t" style="left:1598.2px;top:490.1px;font-size:15.50px;line-height:15.50px;color:#f0f0f0;transform:scaleX(0.9050);">0.0</div>
<div class="a" style="left:1629.0px;top:485.0px;width:40.0px;height:27.0px;background:#222222;"></div>
<div class="t" style="left:1639.2px;top:490.1px;font-size:15.50px;line-height:15.50px;color:#f0f0f0;transform:scaleX(0.9050);">0.0</div>
<div class="a" style="left:1670.0px;top:485.0px;width:39.0px;height:27.0px;background:#222222;"></div>
<div class="t" style="left:1679.8px;top:490.1px;font-size:15.50px;line-height:15.50px;color:#f0f0f0;transform:scaleX(0.9050);">0.0</div>
<div class="a" style="left:1710.0px;top:485.0px;width:40.0px;height:27.0px;background:#222222;"></div>
<div class="t" style="left:1720.2px;top:490.1px;font-size:15.50px;line-height:15.50px;color:#f0f0f0;transform:scaleX(0.9050);">0.0</div>
<div class="a" style="left:1099.0px;top:513.0px;width:39.0px;height:26.0px;background:#222222;"></div>
<div class="t" style="left:1108.8px;top:517.1px;font-size:15.50px;line-height:15.50px;color:#f0f0f0;transform:scaleX(0.9050);">0.0</div>
<div class="a" style="left:1139.0px;top:513.0px;width:40.0px;height:26.0px;background:#222222;"></div>
<div class="t" style="left:1149.2px;top:517.1px;font-size:15.50px;line-height:15.50px;color:#f0f0f0;transform:scaleX(0.9050);">0.0</div>
<div class="a" style="left:1180.0px;top:513.0px;width:40.0px;height:26.0px;background:#222222;"></div>
<div class="t" style="left:1190.2px;top:517.1px;font-size:15.50px;line-height:15.50px;color:#f0f0f0;transform:scaleX(0.9050);">0.0</div>
<div class="a" style="left:1221.0px;top:513.0px;width:40.0px;height:26.0px;background:#222222;"></div>
<div class="t" style="left:1231.2px;top:517.1px;font-size:15.50px;line-height:15.50px;color:#f0f0f0;transform:scaleX(0.9050);">0.0</div>
<div class="a" style="left:1262.0px;top:513.0px;width:40.0px;height:26.0px;background:#222222;"></div>
<div class="t" style="left:1272.2px;top:517.1px;font-size:15.50px;line-height:15.50px;color:#f0f0f0;transform:scaleX(0.9050);">0.0</div>
<div class="a" style="left:1303.0px;top:513.0px;width:39.0px;height:26.0px;background:#222222;"></div>
<div class="t" style="left:1312.8px;top:517.1px;font-size:15.50px;line-height:15.50px;color:#f0f0f0;transform:scaleX(0.9050);">0.0</div>
<div class="a" style="left:1343.0px;top:513.0px;width:40.0px;height:26.0px;background:#222222;"></div>
<div class="t" style="left:1353.2px;top:517.1px;font-size:15.50px;line-height:15.50px;color:#f0f0f0;transform:scaleX(0.9050);">0.0</div>
<div class="a" style="left:1384.0px;top:513.0px;width:40.0px;height:26.0px;background:#222222;"></div>
<div class="t" style="left:1394.2px;top:517.1px;font-size:15.50px;line-height:15.50px;color:#f0f0f0;transform:scaleX(0.9050);">0.0</div>
<div class="a" style="left:1425.0px;top:513.0px;width:40.0px;height:26.0px;background:#222222;"></div>
<div class="t" style="left:1435.2px;top:517.1px;font-size:15.50px;line-height:15.50px;color:#f0f0f0;transform:scaleX(0.9050);">0.0</div>
<div class="a" style="left:1466.0px;top:513.0px;width:39.0px;height:26.0px;background:#222222;"></div>
<div class="t" style="left:1475.8px;top:517.1px;font-size:15.50px;line-height:15.50px;color:#f0f0f0;transform:scaleX(0.9050);">0.0</div>
<div class="a" style="left:1506.0px;top:513.0px;width:40.0px;height:26.0px;background:#222222;"></div>
<div class="t" style="left:1516.2px;top:517.1px;font-size:15.50px;line-height:15.50px;color:#f0f0f0;transform:scaleX(0.9050);">0.0</div>
<div class="a" style="left:1547.0px;top:513.0px;width:40.0px;height:26.0px;background:#222222;"></div>
<div class="t" style="left:1557.2px;top:517.1px;font-size:15.50px;line-height:15.50px;color:#f0f0f0;transform:scaleX(0.9050);">0.0</div>
<div class="a" style="left:1588.0px;top:513.0px;width:40.0px;height:26.0px;background:#222222;"></div>
<div class="t" style="left:1598.2px;top:517.1px;font-size:15.50px;line-height:15.50px;color:#f0f0f0;transform:scaleX(0.9050);">0.0</div>
<div class="a" style="left:1629.0px;top:513.0px;width:40.0px;height:26.0px;background:#222222;"></div>
<div class="t" style="left:1639.2px;top:517.1px;font-size:15.50px;line-height:15.50px;color:#f0f0f0;transform:scaleX(0.9050);">0.0</div>
<div class="a" style="left:1670.0px;top:513.0px;width:39.0px;height:26.0px;background:#222222;"></div>
<div class="t" style="left:1679.8px;top:517.1px;font-size:15.50px;line-height:15.50px;color:#f0f0f0;transform:scaleX(0.9050);">0.0</div>
<div class="a" style="left:1710.0px;top:513.0px;width:40.0px;height:26.0px;background:#222222;"></div>
<div class="t" style="left:1720.2px;top:517.1px;font-size:15.50px;line-height:15.50px;color:#f0f0f0;transform:scaleX(0.9050);">0.0</div>
<div class="a" style="left:1099.0px;top:540.0px;width:39.0px;height:27.0px;background:#222222;"></div>
<div class="t" style="left:1108.8px;top:545.1px;font-size:15.50px;line-height:15.50px;color:#f0f0f0;transform:scaleX(0.9050);">0.0</div>
<div class="a" style="left:1139.0px;top:540.0px;width:40.0px;height:27.0px;background:#222222;"></div>
<div class="t" style="left:1149.2px;top:545.1px;font-size:15.50px;line-height:15.50px;color:#f0f0f0;transform:scaleX(0.9050);">0.0</div>
<div class="a" style="left:1180.0px;top:540.0px;width:40.0px;height:27.0px;background:#222222;"></div>
<div class="t" style="left:1190.2px;top:545.1px;font-size:15.50px;line-height:15.50px;color:#f0f0f0;transform:scaleX(0.9050);">0.0</div>
<div class="a" style="left:1221.0px;top:540.0px;width:40.0px;height:27.0px;background:#222222;"></div>
<div class="t" style="left:1231.2px;top:545.1px;font-size:15.50px;line-height:15.50px;color:#f0f0f0;transform:scaleX(0.9050);">0.0</div>
<div class="a" style="left:1262.0px;top:540.0px;width:40.0px;height:27.0px;background:#222222;"></div>
<div class="t" style="left:1272.2px;top:545.1px;font-size:15.50px;line-height:15.50px;color:#f0f0f0;transform:scaleX(0.9050);">0.0</div>
<div class="a" style="left:1303.0px;top:540.0px;width:39.0px;height:27.0px;background:#222222;"></div>
<div class="t" style="left:1312.8px;top:545.1px;font-size:15.50px;line-height:15.50px;color:#f0f0f0;transform:scaleX(0.9050);">0.0</div>
<div class="a" style="left:1343.0px;top:540.0px;width:40.0px;height:27.0px;background:#222222;"></div>
<div class="t" style="left:1353.2px;top:545.1px;font-size:15.50px;line-height:15.50px;color:#f0f0f0;transform:scaleX(0.9050);">0.0</div>
<div class="a" style="left:1384.0px;top:540.0px;width:40.0px;height:27.0px;background:#222222;"></div>
<div class="t" style="left:1394.2px;top:545.1px;font-size:15.50px;line-height:15.50px;color:#f0f0f0;transform:scaleX(0.9050);">0.0</div>
<div class="a" style="left:1425.0px;top:540.0px;width:40.0px;height:27.0px;background:#222222;"></div>
<div class="t" style="left:1435.2px;top:545.1px;font-size:15.50px;line-height:15.50px;color:#f0f0f0;transform:scaleX(0.9050);">0.0</div>
<div class="a" style="left:1466.0px;top:540.0px;width:39.0px;height:27.0px;background:#222222;"></div>
<div class="t" style="left:1475.8px;top:545.1px;font-size:15.50px;line-height:15.50px;color:#f0f0f0;transform:scaleX(0.9050);">0.0</div>
<div class="a" style="left:1506.0px;top:540.0px;width:40.0px;height:27.0px;background:#222222;"></div>
<div class="t" style="left:1516.2px;top:545.1px;font-size:15.50px;line-height:15.50px;color:#f0f0f0;transform:scaleX(0.9050);">0.0</div>
<div class="a" style="left:1547.0px;top:540.0px;width:40.0px;height:27.0px;background:#222222;"></div>
<div class="t" style="left:1557.2px;top:545.1px;font-size:15.50px;line-height:15.50px;color:#f0f0f0;transform:scaleX(0.9050);">0.0</div>
<div class="a" style="left:1588.0px;top:540.0px;width:40.0px;height:27.0px;background:#222222;"></div>
<div class="t" style="left:1598.2px;top:545.1px;font-size:15.50px;line-height:15.50px;color:#f0f0f0;transform:scaleX(0.9050);">0.0</div>
<div class="a" style="left:1629.0px;top:540.0px;width:40.0px;height:27.0px;background:#222222;"></div>
<div class="t" style="left:1639.2px;top:545.1px;font-size:15.50px;line-height:15.50px;color:#f0f0f0;transform:scaleX(0.9050);">0.0</div>
<div class="a" style="left:1670.0px;top:540.0px;width:39.0px;height:27.0px;background:#222222;"></div>
<div class="t" style="left:1679.8px;top:545.1px;font-size:15.50px;line-height:15.50px;color:#f0f0f0;transform:scaleX(0.9050);">0.0</div>
<div class="a" style="left:1710.0px;top:540.0px;width:40.0px;height:27.0px;background:#222222;"></div>
<div class="t" style="left:1720.2px;top:545.1px;font-size:15.50px;line-height:15.50px;color:#f0f0f0;transform:scaleX(0.9050);">0.0</div>
<div class="a" style="left:1099.0px;top:568.0px;width:39.0px;height:27.0px;background:#222222;"></div>
<div class="t" style="left:1108.8px;top:573.1px;font-size:15.50px;line-height:15.50px;color:#f0f0f0;transform:scaleX(0.9050);">0.0</div>
<div class="a" style="left:1139.0px;top:568.0px;width:40.0px;height:27.0px;background:#222222;"></div>
<div class="t" style="left:1149.2px;top:573.1px;font-size:15.50px;line-height:15.50px;color:#f0f0f0;transform:scaleX(0.9050);">0.0</div>
<div class="a" style="left:1180.0px;top:568.0px;width:40.0px;height:27.0px;background:#222222;"></div>
<div class="t" style="left:1190.2px;top:573.1px;font-size:15.50px;line-height:15.50px;color:#f0f0f0;transform:scaleX(0.9050);">0.0</div>
<div class="a" style="left:1221.0px;top:568.0px;width:40.0px;height:27.0px;background:#222222;"></div>
<div class="t" style="left:1231.2px;top:573.1px;font-size:15.50px;line-height:15.50px;color:#f0f0f0;transform:scaleX(0.9050);">0.0</div>
<div class="a" style="left:1262.0px;top:568.0px;width:40.0px;height:27.0px;background:#222222;"></div>
<div class="t" style="left:1272.2px;top:573.1px;font-size:15.50px;line-height:15.50px;color:#f0f0f0;transform:scaleX(0.9050);">0.0</div>
<div class="a" style="left:1303.0px;top:568.0px;width:39.0px;height:27.0px;background:#222222;"></div>
<div class="t" style="left:1312.8px;top:573.1px;font-size:15.50px;line-height:15.50px;color:#f0f0f0;transform:scaleX(0.9050);">0.0</div>
<div class="a" style="left:1343.0px;top:568.0px;width:40.0px;height:27.0px;background:#222222;"></div>
<div class="t" style="left:1353.2px;top:573.1px;font-size:15.50px;line-height:15.50px;color:#f0f0f0;transform:scaleX(0.9050);">0.0</div>
<div class="a" style="left:1384.0px;top:568.0px;width:40.0px;height:27.0px;background:#222222;"></div>
<div class="t" style="left:1394.2px;top:573.1px;font-size:15.50px;line-height:15.50px;color:#f0f0f0;transform:scaleX(0.9050);">0.0</div>
<div class="a" style="left:1425.0px;top:568.0px;width:40.0px;height:27.0px;background:#222222;"></div>
<div class="t" style="left:1435.2px;top:573.1px;font-size:15.50px;line-height:15.50px;color:#f0f0f0;transform:scaleX(0.9050);">0.0</div>
<div class="a" style="left:1466.0px;top:568.0px;width:39.0px;height:27.0px;background:#222222;"></div>
<div class="t" style="left:1475.8px;top:573.1px;font-size:15.50px;line-height:15.50px;color:#f0f0f0;transform:scaleX(0.9050);">0.0</div>
<div class="a" style="left:1506.0px;top:568.0px;width:40.0px;height:27.0px;background:#222222;"></div>
<div class="t" style="left:1516.2px;top:573.1px;font-size:15.50px;line-height:15.50px;color:#f0f0f0;transform:scaleX(0.9050);">0.0</div>
<div class="a" style="left:1547.0px;top:568.0px;width:40.0px;height:27.0px;background:#222222;"></div>
<div class="t" style="left:1557.2px;top:573.1px;font-size:15.50px;line-height:15.50px;color:#f0f0f0;transform:scaleX(0.9050);">0.0</div>
<div class="a" style="left:1588.0px;top:568.0px;width:40.0px;height:27.0px;background:#222222;"></div>
<div class="t" style="left:1598.2px;top:573.1px;font-size:15.50px;line-height:15.50px;color:#f0f0f0;transform:scaleX(0.9050);">0.0</div>
<div class="a" style="left:1629.0px;top:568.0px;width:40.0px;height:27.0px;background:#222222;"></div>
<div class="t" style="left:1639.2px;top:573.1px;font-size:15.50px;line-height:15.50px;color:#f0f0f0;transform:scaleX(0.9050);">0.0</div>
<div class="a" style="left:1670.0px;top:568.0px;width:39.0px;height:27.0px;background:#222222;"></div>
<div class="t" style="left:1679.8px;top:573.1px;font-size:15.50px;line-height:15.50px;color:#f0f0f0;transform:scaleX(0.9050);">0.0</div>
<div class="a" style="left:1710.0px;top:568.0px;width:40.0px;height:27.0px;background:#222222;"></div>
<div class="t" style="left:1720.2px;top:573.1px;font-size:15.50px;line-height:15.50px;color:#f0f0f0;transform:scaleX(0.9050);">0.0</div>
<div class="a" style="left:1099.0px;top:596.0px;width:39.0px;height:27.0px;background:#222222;"></div>
<div class="t" style="left:1108.8px;top:601.1px;font-size:15.50px;line-height:15.50px;color:#f0f0f0;transform:scaleX(0.9050);">0.0</div>
<div class="a" style="left:1139.0px;top:596.0px;width:40.0px;height:27.0px;background:#222222;"></div>
<div class="t" style="left:1149.2px;top:601.1px;font-size:15.50px;line-height:15.50px;color:#f0f0f0;transform:scaleX(0.9050);">0.0</div>
<div class="a" style="left:1180.0px;top:596.0px;width:40.0px;height:27.0px;background:#222222;"></div>
<div class="t" style="left:1190.2px;top:601.1px;font-size:15.50px;line-height:15.50px;color:#f0f0f0;transform:scaleX(0.9050);">0.0</div>
<div class="a" style="left:1221.0px;top:596.0px;width:40.0px;height:27.0px;background:#222222;"></div>
<div class="t" style="left:1231.2px;top:601.1px;font-size:15.50px;line-height:15.50px;color:#f0f0f0;transform:scaleX(0.9050);">0.0</div>
<div class="a" style="left:1262.0px;top:596.0px;width:40.0px;height:27.0px;background:#222222;"></div>
<div class="t" style="left:1272.2px;top:601.1px;font-size:15.50px;line-height:15.50px;color:#f0f0f0;transform:scaleX(0.9050);">0.0</div>
<div class="a" style="left:1303.0px;top:596.0px;width:39.0px;height:27.0px;background:#222222;"></div>
<div class="t" style="left:1312.8px;top:601.1px;font-size:15.50px;line-height:15.50px;color:#f0f0f0;transform:scaleX(0.9050);">0.0</div>
<div class="a" style="left:1343.0px;top:596.0px;width:40.0px;height:27.0px;background:#222222;"></div>
<div class="t" style="left:1353.2px;top:601.1px;font-size:15.50px;line-height:15.50px;color:#f0f0f0;transform:scaleX(0.9050);">0.0</div>
<div class="a" style="left:1384.0px;top:596.0px;width:40.0px;height:27.0px;background:#222222;"></div>
<div class="t" style="left:1394.2px;top:601.1px;font-size:15.50px;line-height:15.50px;color:#f0f0f0;transform:scaleX(0.9050);">0.0</div>
<div class="a" style="left:1425.0px;top:596.0px;width:40.0px;height:27.0px;background:#222222;"></div>
<div class="t" style="left:1435.2px;top:601.1px;font-size:15.50px;line-height:15.50px;color:#f0f0f0;transform:scaleX(0.9050);">0.0</div>
<div class="a" style="left:1466.0px;top:596.0px;width:39.0px;height:27.0px;background:#222222;"></div>
<div class="t" style="left:1475.8px;top:601.1px;font-size:15.50px;line-height:15.50px;color:#f0f0f0;transform:scaleX(0.9050);">0.0</div>
<div class="a" style="left:1506.0px;top:596.0px;width:40.0px;height:27.0px;background:#222222;"></div>
<div class="t" style="left:1516.2px;top:601.1px;font-size:15.50px;line-height:15.50px;color:#f0f0f0;transform:scaleX(0.9050);">0.0</div>
<div class="a" style="left:1547.0px;top:596.0px;width:40.0px;height:27.0px;background:#222222;"></div>
<div class="t" style="left:1557.2px;top:601.1px;font-size:15.50px;line-height:15.50px;color:#f0f0f0;transform:scaleX(0.9050);">0.0</div>
<div class="a" style="left:1588.0px;top:596.0px;width:40.0px;height:27.0px;background:#222222;"></div>
<div class="t" style="left:1598.2px;top:601.1px;font-size:15.50px;line-height:15.50px;color:#f0f0f0;transform:scaleX(0.9050);">0.0</div>
<div class="a" style="left:1629.0px;top:596.0px;width:40.0px;height:27.0px;background:#222222;"></div>
<div class="t" style="left:1639.2px;top:601.1px;font-size:15.50px;line-height:15.50px;color:#f0f0f0;transform:scaleX(0.9050);">0.0</div>
<div class="a" style="left:1670.0px;top:596.0px;width:39.0px;height:27.0px;background:#222222;"></div>
<div class="t" style="left:1679.8px;top:601.1px;font-size:15.50px;line-height:15.50px;color:#f0f0f0;transform:scaleX(0.9050);">0.0</div>
<div class="a" style="left:1710.0px;top:596.0px;width:40.0px;height:27.0px;background:#222222;"></div>
<div class="t" style="left:1720.2px;top:601.1px;font-size:15.50px;line-height:15.50px;color:#f0f0f0;transform:scaleX(0.9050);">0.0</div>
<div class="a" style="left:1290.5px;top:469.0px;width:460.5px;height:1.2px;background:#e88c8c;"></div>
<div class="a" style="left:1312.0px;top:519.7px;width:439.0px;height:1.8px;background:#f2f21a;"></div>
<div class="a" style="left:1270.0px;top:506.0px;width:43.0px;height:29.5px;box-sizing:border-box;border:2.5px solid #f2f21a;"></div>
<div class="a" style="left:1290.0px;top:457.0px;width:1.5px;height:166.0px;background:#f2f21a;"></div>
<div class="a" style="left:1756.0px;top:456.5px;width:17.0px;height:168.5px;background:#141414;"></div>
<div class="a" style="left:1757.0px;top:457.5px;width:15.0px;height:166.5px;background:#1b1b1b;"></div>
<div class="a" style="left:1758.0px;top:483.0px;width:13.0px;height:65.0px;background:#2c2c2e;"></div>
<svg class="a" style="left:1759.0px;top:459.5px;" width="11.0" height="8.0" viewBox="0 0 11.0 8.0"><path d="M0 7 L5.5 1 L11 7 Z" fill="#333"/></svg>
<svg class="a" style="left:1759.0px;top:615.0px;" width="11.0" height="8.0" viewBox="0 0 11.0 8.0"><path d="M0 1 L5.5 7 L11 1 Z" fill="#333"/></svg>
<div class="a" style="left:1758.0px;top:972.0px;width:8.0px;height:1.0px;background:#3a3a3a;"></div>
<div class="a" style="left:640.0px;top:180.0px;width:639.5px;height:662.5px;background:#14365c;"></div>
<div class="a" style="left:641.5px;top:181.5px;width:637.0px;height:660.0px;background:#f0f0f0;"></div>
<div class="a" style="left:641.5px;top:181.5px;width:637.0px;height:37.5px;background:#ffffff;"></div>
<div class="a" style="left:643.0px;top:243.0px;width:632.0px;height:559.0px;background:#ffffff;"></div>
<div class="a" style="left:643.0px;top:242.0px;width:632.0px;height:1.0px;background:#dadada;"></div>
<div class="a" style="left:642.0px;top:219.0px;width:113.0px;height:24.0px;background:#ffffff;border-right:1px solid #dadada;box-sizing:border-box;"></div>
<div class="a" style="left:645.0px;top:218.3px;width:110.0px;height:1.3px;background:#d8d8d8;"></div>
<div class="a" style="left:755.0px;top:221.0px;width:123.0px;height:22.0px;background:#f0f0f0;box-sizing:border-box;border:1px solid #dadada;border-bottom:none;"></div>
<div class="a" style="left:652.0px;top:190.5px;width:18.5px;height:18.2px;background:#000;"></div>
<div class="t" style="left:654.0px;top:195.5px;font-size:10.00px;line-height:10.00px;color:#cfcfcf;transform:scaleX(0.8246);font-style:italic;font-weight:bold;">G4</div>
<div class="t" style="left:665.5px;top:192.4px;font-size:6.00px;line-height:6.00px;color:#cfcfcf;">+</div>
<div class="t" style="left:674.4px;top:193.7px;font-size:14.00px;line-height:14.00px;color:#1e1e1e;transform:scaleX(0.9874);">Properties</div>
<div class="a" style="left:1133.0px;top:198.5px;width:12.0px;height:1.0px;background:#111;"></div>
<div class="a" style="left:1188.0px;top:193.0px;width:12.0px;height:12.0px;box-sizing:border-box;border:1px solid #111;"></div>
<svg class="a" style="left:1243.0px;top:192.0px;" width="14.0" height="14.0" viewBox="0 0 14.0 14.0"><path d="M1 1 L13 13 M13 1 L1 13" stroke="#111" stroke-width="1.1"/></svg>
<div class="t" style="left:651.5px;top:224.0px;font-size:13.00px;line-height:13.00px;color:#1e1e1e;transform:scaleX(1.0352);">Runtime Values</div>
<div class="t" style="left:761.0px;top:226.5px;font-size:13.00px;line-height:13.00px;color:#1e1e1e;transform:scaleX(1.0357);">Runtime Value List</div>
<svg class="a" style="left:653.0px;top:256.0px;" width="21.0" height="20.0" viewBox="0 0 21.0 20.0"><g fill="#fff" stroke="#6a7f99"><rect x="0.5" y="1.5" width="6" height="6" rx="1"/><rect x="0.5" y="11.5" width="6" height="6" rx="1"/></g><g fill="#333"><rect x="2.5" y="3.5" width="2" height="2"/><rect x="2.5" y="13.5" width="2" height="2"/></g><g fill="#9aa5b5"><rect x="9" y="1" width="4" height="1"/><rect x="9" y="4" width="11" height="1"/><rect x="9" y="7" width="11" height="1"/><rect x="9" y="11" width="4" height="1"/><rect x="9" y="14" width="11" height="1"/><rect x="9" y="17" width="7" height="1"/></g></svg>
<div class="a" style="left:678.0px;top:250.6px;width:27.6px;height:28.8px;background:#cce8ff;box-sizing:border-box;border:1px solid #99d1ff;"></div>
<div class="t" style="left:685.0px;top:255.1px;font-size:10.50px;line-height:10.50px;color:#3060b0;font-family:"Liberation Serif",serif;font-weight:bold;">A</div>
<div class="t" style="left:685.0px;top:265.6px;font-size:10.50px;line-height:10.50px;color:#c04040;font-family:"Liberation Serif",serif;font-weight:bold;">Z</div>
<svg class="a" style="left:694.0px;top:255.0px;" width="8.0" height="20.0" viewBox="0 0 8.0 20.0"><path d="M4 0 V16" stroke="#111" stroke-width="1.3"/><path d="M1 13 L4 19 L7 13 Z" fill="#111"/></svg>
<div class="a" style="left:713.0px;top:250.6px;width:110.8px;height:25.0px;background:#ffffff;box-sizing:border-box;border:1px solid #0078d7;"></div>
<div class="a" style="left:716.0px;top:254.0px;width:29.0px;height:15.5px;background:#0078d7;"></div>
<div class="t" style="left:716.5px;top:255.5px;font-size:13.00px;line-height:13.00px;color:#ffffff;transform:scaleX(1.0761);">gear</div>
<svg class="a" style="left:711.0px;top:256.0px;" width="16.0" height="24.0" viewBox="0 0 16.0 24.0"><path d="M1 1 L1 18 L5 14 L8 21 L11 20 L8 13 L13 13 Z" fill="#fff" stroke="#222" stroke-width="1"/></svg>
<div class="a" style="left:832.5px;top:255.0px;width:137.5px;height:29.0px;box-sizing:border-box;border:1px solid #dcdcdc;"></div>
<div class="a" style="left:838.0px;top:250.0px;width:32.0px;height:12.0px;background:#ffffff;"></div>
<div class="t" style="left:840.6px;top:249.5px;font-size:13.00px;line-height:13.00px;color:#1e1e1e;transform:scaleX(0.9520);">Filter</div>
<svg class="a" style="left:840.0px;top:264.0px;" width="18.0" height="18.0" viewBox="0 0 18.0 18.0"><circle cx="8.5" cy="8.5" r="7.2" fill="#fff" stroke="#333" stroke-width="1.2"/><circle cx="8.5" cy="8.5" r="4" fill="#222"/></svg>
<div class="t" style="left:860.0px;top:267.0px;font-size:13.00px;line-height:13.00px;color:#1e1e1e;transform:scaleX(0.8999);">All</div>
<svg class="a" style="left:904.0px;top:264.0px;" width="18.0" height="18.0" viewBox="0 0 18.0 18.0"><circle cx="8.5" cy="8.5" r="7.2" fill="#fff" stroke="#333" stroke-width="1.2"/></svg>
<div class="t" style="left:924.0px;top:267.0px;font-size:13.00px;line-height:13.00px;color:#1e1e1e;transform:scaleX(0.9714);">Tables</div>
<div class="a" style="left:647.0px;top:287.5px;width:324.0px;height:504.0px;background:#ffffff;box-sizing:border-box;border:1px solid #828790;"></div>
<div class="a" style="left:662px;top:298px;width:0;height:251px;border-left:1px dotted #a0a0a0;"></div>
<div class="a" style="left:663px;top:298.5px;width:13px;height:0;border-top:1px dotted #a0a0a0;"></div>
<svg class="a" style="left:676.0px;top:289.5px;" width="18.0" height="19.0" viewBox="0 0 18.0 19.0"><path d="M1.5 1.5 H12.5 L16.5 5.5 V17.5 H1.5 Z" fill="#fff" stroke="#b8b8b8"/><path d="M2.5 9 C4.5 3.5 6.5 3.5 8.5 9 S12.5 14.5 15 8" fill="none" stroke="#2fae2f" stroke-width="1.5"/></svg>
<div class="t" style="left:702.0px;top:292.2px;font-size:13.00px;line-height:13.00px;color:#1e1e1e;transform:scaleX(0.9740);">Gear (Status)</div>
<div class="a" style="left:663px;top:317.7px;width:13px;height:0;border-top:1px dotted #a0a0a0;"></div>
<svg class="a" style="left:676.0px;top:308.7px;" width="18.0" height="19.0" viewBox="0 0 18.0 19.0"><path d="M1.5 1.5 H12.5 L16.5 5.5 V17.5 H1.5 Z" fill="#fff" stroke="#b8b8b8"/><path d="M2.5 9 C4.5 3.5 6.5 3.5 8.5 9 S12.5 14.5 15 8" fill="none" stroke="#aaaaaa" stroke-width="1.5"/></svg>
<div class="t" style="left:702.0px;top:311.4px;font-size:13.00px;line-height:13.00px;color:#1e1e1e;transform:scaleX(0.9949);">Gear Cut Status (Pre FW 5.3.0) (Status)</div>
<div class="a" style="left:663px;top:336.9px;width:13px;height:0;border-top:1px dotted #a0a0a0;"></div>
<svg class="a" style="left:676.0px;top:327.9px;" width="18.0" height="19.0" viewBox="0 0 18.0 19.0"><path d="M1.5 1.5 H12.5 L16.5 5.5 V17.5 H1.5 Z" fill="#fff" stroke="#b8b8b8"/><path d="M2.5 9 C4.5 3.5 6.5 3.5 8.5 9 S12.5 14.5 15 8" fill="none" stroke="#2fae2f" stroke-width="1.5"/></svg>
<div class="t" style="left:702.0px;top:330.6px;font-size:13.00px;line-height:13.00px;color:#1e1e1e;transform:scaleX(0.9747);">Gear Lever Force</div>
<div class="a" style="left:663px;top:356.0px;width:13px;height:0;border-top:1px dotted #a0a0a0;"></div>
<svg class="a" style="left:676.0px;top:347.0px;" width="18.0" height="19.0" viewBox="0 0 18.0 19.0"><path d="M1.5 1.5 H12.5 L16.5 5.5 V17.5 H1.5 Z" fill="#fff" stroke="#b8b8b8"/><path d="M2.5 9 C4.5 3.5 6.5 3.5 8.5 9 S12.5 14.5 15 8" fill="none" stroke="#2fae2f" stroke-width="1.5"/></svg>
<div class="t" style="left:702.0px;top:349.7px;font-size:13.00px;line-height:13.00px;color:#1e1e1e;">Gear Ratio Calc.</div>
<div class="a" style="left:663px;top:375.2px;width:13px;height:0;border-top:1px dotted #a0a0a0;"></div>
<svg class="a" style="left:676.0px;top:366.2px;" width="18.0" height="19.0" viewBox="0 0 18.0 19.0"><path d="M1.5 1.5 H12.5 L16.5 5.5 V17.5 H1.5 Z" fill="#fff" stroke="#b8b8b8"/><path d="M2.5 9 C4.5 3.5 6.5 3.5 8.5 9 S12.5 14.5 15 8" fill="none" stroke="#2fae2f" stroke-width="1.5"/></svg>
<div class="t" style="left:702.0px;top:368.9px;font-size:13.00px;line-height:13.00px;color:#1e1e1e;transform:scaleX(1.0167);">Gear Ratio Status (Status)</div>
<div class="a" style="left:663px;top:394.4px;width:13px;height:0;border-top:1px dotted #a0a0a0;"></div>
<svg class="a" style="left:676.0px;top:385.4px;" width="18.0" height="19.0" viewBox="0 0 18.0 19.0"><path d="M1.5 1.5 H12.5 L16.5 5.5 V17.5 H1.5 Z" fill="#fff" stroke="#b8b8b8"/><path d="M2.5 9 C4.5 3.5 6.5 3.5 8.5 9 S12.5 14.5 15 8" fill="none" stroke="#2fae2f" stroke-width="1.5"/></svg>
<div class="t" style="left:702.0px;top:388.1px;font-size:13.00px;line-height:13.00px;color:#1e1e1e;transform:scaleX(1.0493);">Gear Shift Count</div>
<div class="a" style="left:663px;top:413.6px;width:13px;height:0;border-top:1px dotted #a0a0a0;"></div>
<svg class="a" style="left:676.0px;top:404.6px;" width="18.0" height="19.0" viewBox="0 0 18.0 19.0"><path d="M1.5 1.5 H12.5 L16.5 5.5 V17.5 H1.5 Z" fill="#fff" stroke="#b8b8b8"/><path d="M2.5 9 C4.5 3.5 6.5 3.5 8.5 9 S12.5 14.5 15 8" fill="none" stroke="#2fae2f" stroke-width="1.5"/></svg>
<div class="t" style="left:702.0px;top:407.3px;font-size:13.00px;line-height:13.00px;color:#1e1e1e;transform:scaleX(1.0294);">Gear Shift Fuel</div>
<div class="a" style="left:663px;top:432.8px;width:13px;height:0;border-top:1px dotted #a0a0a0;"></div>
<svg class="a" style="left:676.0px;top:423.8px;" width="18.0" height="19.0" viewBox="0 0 18.0 19.0"><path d="M1.5 1.5 H12.5 L16.5 5.5 V17.5 H1.5 Z" fill="#fff" stroke="#b8b8b8"/><path d="M2.5 9 C4.5 3.5 6.5 3.5 8.5 9 S12.5 14.5 15 8" fill="none" stroke="#2fae2f" stroke-width="1.5"/></svg>
<div class="t" style="left:702.0px;top:426.5px;font-size:13.00px;line-height:13.00px;color:#1e1e1e;transform:scaleX(1.0230);">Gear Shift Ign Trim</div>
<div class="a" style="left:663px;top:451.9px;width:13px;height:0;border-top:1px dotted #a0a0a0;"></div>
<svg class="a" style="left:676.0px;top:442.9px;" width="18.0" height="19.0" viewBox="0 0 18.0 19.0"><path d="M1.5 1.5 H12.5 L16.5 5.5 V17.5 H1.5 Z" fill="#fff" stroke="#b8b8b8"/><path d="M2.5 9 C4.5 3.5 6.5 3.5 8.5 9 S12.5 14.5 15 8" fill="none" stroke="#2fae2f" stroke-width="1.5"/></svg>
<div class="t" style="left:702.0px;top:445.6px;font-size:13.00px;line-height:13.00px;color:#1e1e1e;transform:scaleX(1.0367);">Gear Shift Last Shift Period</div>
<div class="a" style="left:663px;top:471.1px;width:13px;height:0;border-top:1px dotted #a0a0a0;"></div>
<svg class="a" style="left:676.0px;top:462.1px;" width="18.0" height="19.0" viewBox="0 0 18.0 19.0"><path d="M1.5 1.5 H12.5 L16.5 5.5 V17.5 H1.5 Z" fill="#fff" stroke="#b8b8b8"/><path d="M2.5 9 C4.5 3.5 6.5 3.5 8.5 9 S12.5 14.5 15 8" fill="none" stroke="#2fae2f" stroke-width="1.5"/></svg>
<div class="t" style="left:702.0px;top:464.8px;font-size:13.00px;line-height:13.00px;color:#1e1e1e;transform:scaleX(1.0194);">Gear Shift Status (Status)</div>
<div class="a" style="left:663px;top:490.3px;width:13px;height:0;border-top:1px dotted #a0a0a0;"></div>
<svg class="a" style="left:676.0px;top:481.3px;" width="18.0" height="19.0" viewBox="0 0 18.0 19.0"><path d="M1.5 1.5 H12.5 L16.5 5.5 V17.5 H1.5 Z" fill="#fff" stroke="#b8b8b8"/><path d="M2.5 9 C4.5 3.5 6.5 3.5 8.5 9 S12.5 14.5 15 8" fill="none" stroke="#2fae2f" stroke-width="1.5"/></svg>
<div class="t" style="left:702.0px;top:484.0px;font-size:13.00px;line-height:13.00px;color:#1e1e1e;transform:scaleX(1.0468);">Gear Shift Throttle Target</div>
<div class="a" style="left:663px;top:509.5px;width:13px;height:0;border-top:1px dotted #a0a0a0;"></div>
<svg class="a" style="left:676.0px;top:500.5px;" width="18.0" height="19.0" viewBox="0 0 18.0 19.0"><path d="M1.5 1.5 H12.5 L16.5 5.5 V17.5 H1.5 Z" fill="#fff" stroke="#b8b8b8"/><path d="M2.5 9 C4.5 3.5 6.5 3.5 8.5 9 S12.5 14.5 15 8" fill="none" stroke="#2fae2f" stroke-width="1.5"/></svg>
<div class="t" style="left:702.0px;top:503.2px;font-size:13.00px;line-height:13.00px;color:#1e1e1e;transform:scaleX(1.0351);">Gear Shifter Position (Status)</div>
<div class="a" style="left:663px;top:528.7px;width:13px;height:0;border-top:1px dotted #a0a0a0;"></div>
<svg class="a" style="left:676.0px;top:519.7px;" width="18.0" height="19.0" viewBox="0 0 18.0 19.0"><path d="M1.5 1.5 H12.5 L16.5 5.5 V17.5 H1.5 Z" fill="#fff" stroke="#b8b8b8"/><path d="M2.5 9 C4.5 3.5 6.5 3.5 8.5 9 S12.5 14.5 15 8" fill="none" stroke="#2fae2f" stroke-width="1.5"/></svg>
<div class="t" style="left:702.0px;top:522.4px;font-size:13.00px;line-height:13.00px;color:#1e1e1e;transform:scaleX(0.9916);">Gear WGate Trim</div>
<div class="a" style="left:663px;top:547.8px;width:13px;height:0;border-top:1px dotted #a0a0a0;"></div>
<svg class="a" style="left:676.0px;top:538.8px;" width="18.0" height="19.0" viewBox="0 0 18.0 19.0"><path d="M1.5 1.5 H12.5 L16.5 5.5 V17.5 H1.5 Z" fill="#fff" stroke="#b8b8b8"/><path d="M2.5 9 C4.5 3.5 6.5 3.5 8.5 9 S12.5 14.5 15 8" fill="none" stroke="#2fae2f" stroke-width="1.5"/></svg>
<div class="t" style="left:702.0px;top:541.5px;font-size:13.00px;line-height:13.00px;color:#1e1e1e;transform:scaleX(1.0275);">In Driving Gear (Status)</div>
<div class="t" style="left:1013.0px;top:255.0px;font-size:13.00px;line-height:13.00px;color:#1e1e1e;transform:scaleX(1.0537);">Table Visibility Groups</div>
<div class="a" style="left:1013.0px;top:277.0px;width:260.0px;height:96.0px;background:#ffffff;box-sizing:border-box;border:1px solid #828790;"></div>
<div class="a" style="left:1015.6px;top:278.8px;width:255.0px;height:14.8px;background:#0078d7;"></div>
<div class="t" style="left:1018.3px;top:279.5px;font-size:13.00px;line-height:13.00px;color:#ffffff;transform:scaleX(1.0260);">Always Visible</div>
<div class="a" style="left:1178.3px;top:376.8px;width:93.7px;height:27.5px;background:#cccccc;"></div>
<svg class="a" style="left:1213.0px;top:380.0px;" width="24.0" height="22.0" viewBox="0 0 24.0 22.0"><path d="M5 4 L19 18 M19 4 L5 18" stroke="#ffffff" stroke-width="4.5" stroke-linecap="round"/></svg>
<div class="t" style="left:1013.0px;top:415.2px;font-size:13.00px;line-height:13.00px;color:#1e1e1e;transform:scaleX(1.0233);">Parameters Always Visible</div>
<div class="a" style="left:1013.0px;top:436.5px;width:260.0px;height:324.0px;background:#ffffff;box-sizing:border-box;border:1px solid #828790;"></div>
<div class="t" style="left:1018.4px;top:440.0px;font-size:13.00px;line-height:13.00px;color:#111111;transform:scaleX(1.0260);">Engine Speed</div>
<div class="t" style="left:1018.4px;top:455.6px;font-size:13.00px;line-height:13.00px;color:#111111;transform:scaleX(0.9585);">MAP</div>
<div class="t" style="left:1018.4px;top:471.1px;font-size:13.00px;line-height:13.00px;color:#111111;transform:scaleX(0.9624);">MGP</div>
<div class="t" style="left:1018.4px;top:486.7px;font-size:13.00px;line-height:13.00px;color:#111111;transform:scaleX(0.9086);">IAT</div>
<div class="t" style="left:1018.4px;top:502.2px;font-size:13.00px;line-height:13.00px;color:#111111;transform:scaleX(0.7693);">ECT</div>
<div class="t" style="left:1018.4px;top:517.8px;font-size:13.00px;line-height:13.00px;color:#111111;transform:scaleX(1.0138);">Gear</div>
<div class="t" style="left:1018.4px;top:533.4px;font-size:13.00px;line-height:13.00px;color:#111111;transform:scaleX(1.0625);">Boost Target</div>
<div class="t" style="left:1018.4px;top:548.9px;font-size:13.00px;line-height:13.00px;color:#111111;transform:scaleX(1.0402);">Active Boost Table</div>
<div class="t" style="left:1018.4px;top:564.5px;font-size:13.00px;line-height:13.00px;color:#111111;transform:scaleX(0.9624);">ECT WGate Trim</div>
<div class="t" style="left:1018.4px;top:580.0px;font-size:13.00px;line-height:13.00px;color:#111111;">IAT WGate Trim</div>
<div class="t" style="left:1018.4px;top:595.6px;font-size:13.00px;line-height:13.00px;color:#111111;transform:scaleX(1.0113);">Gear WGate Trim</div>
<div class="a" style="left:976.3px;top:437.3px;width:27.5px;height:321.7px;background:#dcdcdc;box-sizing:border-box;border:1px solid #c8c8c8;"></div>
<svg class="a" style="left:979.0px;top:589.0px;" width="22.0" height="20.0" viewBox="0 0 22.0 20.0"><defs><linearGradient id="ba" x1="0" y1="0" x2="0" y2="1"><stop offset="0" stop-color="#7cc8ff"/><stop offset="1" stop-color="#1a78e0"/></linearGradient></defs><rect x="1" y="6" width="2" height="8" fill="#3a90e8"/><rect x="4" y="6" width="2" height="8" fill="#3a90e8"/><path d="M7 6 H12 V1.5 L20 10 L12 18.5 V14 H7 Z" fill="url(#ba)" stroke="#1460c0" stroke-width="0.8"/></svg>
<div class="a" style="left:1014.0px;top:769.2px;width:48.0px;height:26.1px;background:#e1e1e1;box-sizing:border-box;border:1px solid #adadad;"></div>
<div class="a" style="left:1072.0px;top:769.2px;width:48.0px;height:26.1px;background:#e1e1e1;box-sizing:border-box;border:1px solid #adadad;"></div>
<div class="a" style="left:1178.6px;top:769.2px;width:93.4px;height:26.1px;background:#e1e1e1;box-sizing:border-box;border:1px solid #adadad;"></div>
<svg class="a" style="left:1027.0px;top:771.0px;" width="22.0" height="22.0" viewBox="0 0 22.0 22.0"><defs><linearGradient id="bu" x1="0" y1="0" x2="0" y2="1"><stop offset="0" stop-color="#8fd3ff"/><stop offset="1" stop-color="#1469e0"/></linearGradient></defs><path d="M11 1 L21 11 H15.5 V20 H6.5 V11 H1 Z" fill="url(#bu)" stroke="#1c5fc0" stroke-width="0.8"/></svg>
<svg class="a" style="left:1084.0px;top:771.0px;" width="22.0" height="22.0" viewBox="0 0 22.0 22.0"><defs><linearGradient id="bd" x1="0" y1="0" x2="0" y2="1"><stop offset="0" stop-color="#8fd3ff"/><stop offset="1" stop-color="#1469e0"/></linearGradient></defs><path d="M11 21 L21 11 H15.5 V2 H6.5 V11 H1 Z" fill="url(#bd)" stroke="#1c5fc0" stroke-width="0.8"/></svg>
<svg class="a" style="left:1213.0px;top:771.0px;" width="24.0" height="23.0" viewBox="0 0 24.0 23.0"><path d="M5 5 L19 18 M19 5 L5 18" stroke="#e02020" stroke-width="4.8" stroke-linecap="round"/></svg>
<div class="a" style="left:988.0px;top:808.8px;width:86.8px;height:27.1px;background:#e1e1e1;box-sizing:border-box;border:1px solid #adadad;"></div>
<div class="t" style="left:1023.2px;top:816.5px;font-size:13.00px;line-height:13.00px;color:#111111;transform:scaleX(0.9932);">Ok</div>
<div class="a" style="left:1085.0px;top:808.8px;width:87.0px;height:27.1px;background:#e1e1e1;box-sizing:border-box;border:1px solid #adadad;"></div>
<div class="t" style="left:1108.5px;top:816.5px;font-size:13.00px;line-height:13.00px;color:#111111;transform:scaleX(0.9885);">Cancel</div>
<div class="a" style="left:1182.0px;top:808.8px;width:87.4px;height:27.1px;background:#e1e1e1;box-sizing:border-box;border:1px solid #adadad;"></div>
<div class="t" style="left:1211.7px;top:816.5px;font-size:13.00px;line-height:13.00px;color:#111111;transform:scaleX(1.0473);">Help</div>
<div class="a" style="left:96.0px;top:1032.0px;width:1728.0px;height:48.0px;background:#0d121a;"></div>
<svg class="a" style="left:115.0px;top:1045.5px;" width="20.0" height="20.0" viewBox="0 0 20.0 20.0"><g fill="#fff"><path d="M0 2.8 L8 1.7 V9.3 H0 Z"/><path d="M9.5 1.5 L20 0 V9.3 H9.5 Z"/><path d="M0 10.7 H8 V18.3 L0 17.2 Z"/><path d="M9.5 10.7 H20 V20 L9.5 18.5 Z"/></g></svg>
<div class="a" style="left:153.3px;top:1032.0px;width:413.4px;height:48.0px;background:#f0f0f0;"></div>
<svg class="a" style="left:164.0px;top:1042.0px;" width="28.0" height="28.0" viewBox="0 0 28.0 28.0"><circle cx="14" cy="14" r="11.2" fill="none" stroke="#000" stroke-width="2.6"/></svg>
<div class="t" style="left:202.5px;top:1049.0px;font-size:16.00px;line-height:16.00px;color:#3a3a3a;transform:scaleX(1.0324);">Type here to search</div>
<svg class="a" style="left:533.0px;top:1045.0px;" width="18.0" height="22.0" viewBox="0 0 18.0 22.0"><rect x="5" y="1" width="8" height="13" rx="4" fill="none" stroke="#333" stroke-width="1.3"/><path d="M2.5 10 A6.5 6.5 0 0 0 15.5 10 M9 16.5 V20 M5.5 20.5 H12.5" fill="none" stroke="#333" stroke-width="1.3"/></svg>
<svg class="a" style="left:584.0px;top:1046.0px;" width="22.0" height="20.0" viewBox="0 0 22.0 20.0"><g fill="none" stroke="#fff" stroke-width="1.4"><rect x="2" y="4" width="12" height="11"/><path d="M0 2.5 H16 M0 16.5 H16"/><path d="M19 7 V18"/></g><circle cx="19" cy="4" r="1.5" fill="#fff"/></svg>
<svg class="a" style="left:643.0px;top:1043.0px;" width="26.0" height="26.0" viewBox="0 0 26.0 26.0"><path d="M4.5 14 C4.5 6 10 2.5 15 2.5 C21.5 2.5 24.5 7 24.5 13.5 H9.5 C9.8 18.5 13.5 20.5 17 20.5 C19.5 20.5 22 19.5 23.5 18.5 V23.5 C21.5 24.8 19 25.5 16 25.5 C9 25.5 4.5 21 4.5 14 Z M9.8 10.5 H19.5 C19.3 7.5 17.5 6 15 6 C12.5 6 10.3 7.8 9.8 10.5 Z" fill="#1e78d8"/><path d="M1 12 C2.5 5 8 1 14 1 C9 3 6 7 5.5 11 Z" fill="#1e78d8"/></svg>
<svg class="a" style="left:702.0px;top:1045.5px;" width="27.0" height="21.0" viewBox="0 0 27.0 21.0"><path d="M1 2 H10 L12 4 H26 V20 H1 Z" fill="#f3cd60"/><rect x="1" y="6" width="25" height="14" fill="#f8dc80"/><path d="M6 11 H21 V20 H17 V15 H10 V20 H6 Z" fill="#2a86d8"/></svg>
<div class="a" style="left:745.0px;top:1032.0px;width:57.5px;height:48.0px;background:#2a2f38;"></div>
<div class="a" style="left:745.0px;top:1077.5px;width:57.5px;height:2.5px;background:#76b9ed;"></div>
<div class="a" style="left:760.0px;top:1041.7px;width:28.3px;height:28.3px;background:#000;"></div>
<div class="t" style="left:762.5px;top:1051.1px;font-size:14.00px;line-height:14.00px;color:#e8e8e8;transform:scaleX(0.9371);">G4</div>
<div class="t" style="left:779.5px;top:1044.9px;font-size:9.00px;line-height:9.00px;color:#e8e8e8;">+</div>
<svg class="a" style="left:1525.0px;top:1045.5px;" width="21.0" height="21.0" viewBox="0 0 21.0 21.0"><g fill="none" stroke="#fff" stroke-width="1.3"><circle cx="13.5" cy="5" r="3.5"/><path d="M7.5 16 C8 10 19 10 19.5 16"/><circle cx="6.5" cy="11.5" r="3"/><path d="M1 20 C1.5 14.5 11.5 14.5 12 20"/></g></svg>
<svg class="a" style="left:1569.0px;top:1050.0px;" width="19.0" height="11.0" viewBox="0 0 19.0 11.0"><path d="M1.5 9.5 L9.5 1.5 L17.5 9.5" fill="none" stroke="#fff" stroke-width="1.4"/></svg>
<svg class="a" style="left:1596.0px;top:1048.0px;" width="22.0" height="16.0" viewBox="0 0 22.0 16.0"><g fill="none" stroke="#fff" stroke-width="1.3"><rect x="6" y="4.5" width="13" height="9"/><path d="M19 7 H21 V11 H19"/><path d="M3.5 1 V5 M1.5 5 H5.5 V8 A2 2 0 0 1 1.5 8 Z M3.5 10 V14"/></g></svg>
<svg class="a" style="left:1625.5px;top:1047.0px;" width="22.0" height="19.0" viewBox="0 0 22.0 19.0"><g fill="none" stroke="#fff" stroke-width="1.3"><rect x="5" y="1.5" width="15" height="11"/><path d="M12.5 12.5 V16.5 M8 17 H17"/><rect x="1" y="3" width="5" height="6" fill="#0d121a"/></g></svg>
<svg class="a" style="left:1654.0px;top:1047.0px;" width="22.0" height="19.0" viewBox="0 0 22.0 19.0"><g fill="none" stroke="#fff" stroke-width="1.3"><path d="M1 6.5 H5 L10 2 V17 L5 12.5 H1 Z"/><path d="M13 6.5 Q15 9.5 13 12.5 M15.5 4.5 Q19 9.5 15.5 14.5"/></g><path d="M18 2.5 Q22.5 9.5 18 16.5" fill="none" stroke="#888" stroke-width="1.2"/></svg>
<div class="t" style="left:1695.0px;top:1038.9px;font-size:14.00px;line-height:14.00px;color:#ffffff;transform:scaleX(0.9590);">1:20 PM</div>
<div class="t" style="left:1688.2px;top:1060.4px;font-size:14.00px;line-height:14.00px;color:#ffffff;transform:scaleX(1.0212);">12/7/2018</div>
<svg class="a" style="left:1773.0px;top:1045.5px;" width="22.0" height="21.0" viewBox="0 0 22.0 21.0"><path d="M1.5 1.5 H20.5 V15.5 H12.5 L10.5 19 L8.5 15.5 H1.5 Z" fill="none" stroke="#fff" stroke-width="1.3"/></svg>
<div class="a" style="left:1818.5px;top:1032.0px;width:1.0px;height:48.0px;background:#4a4e56;"></div>
</div></body></html>
